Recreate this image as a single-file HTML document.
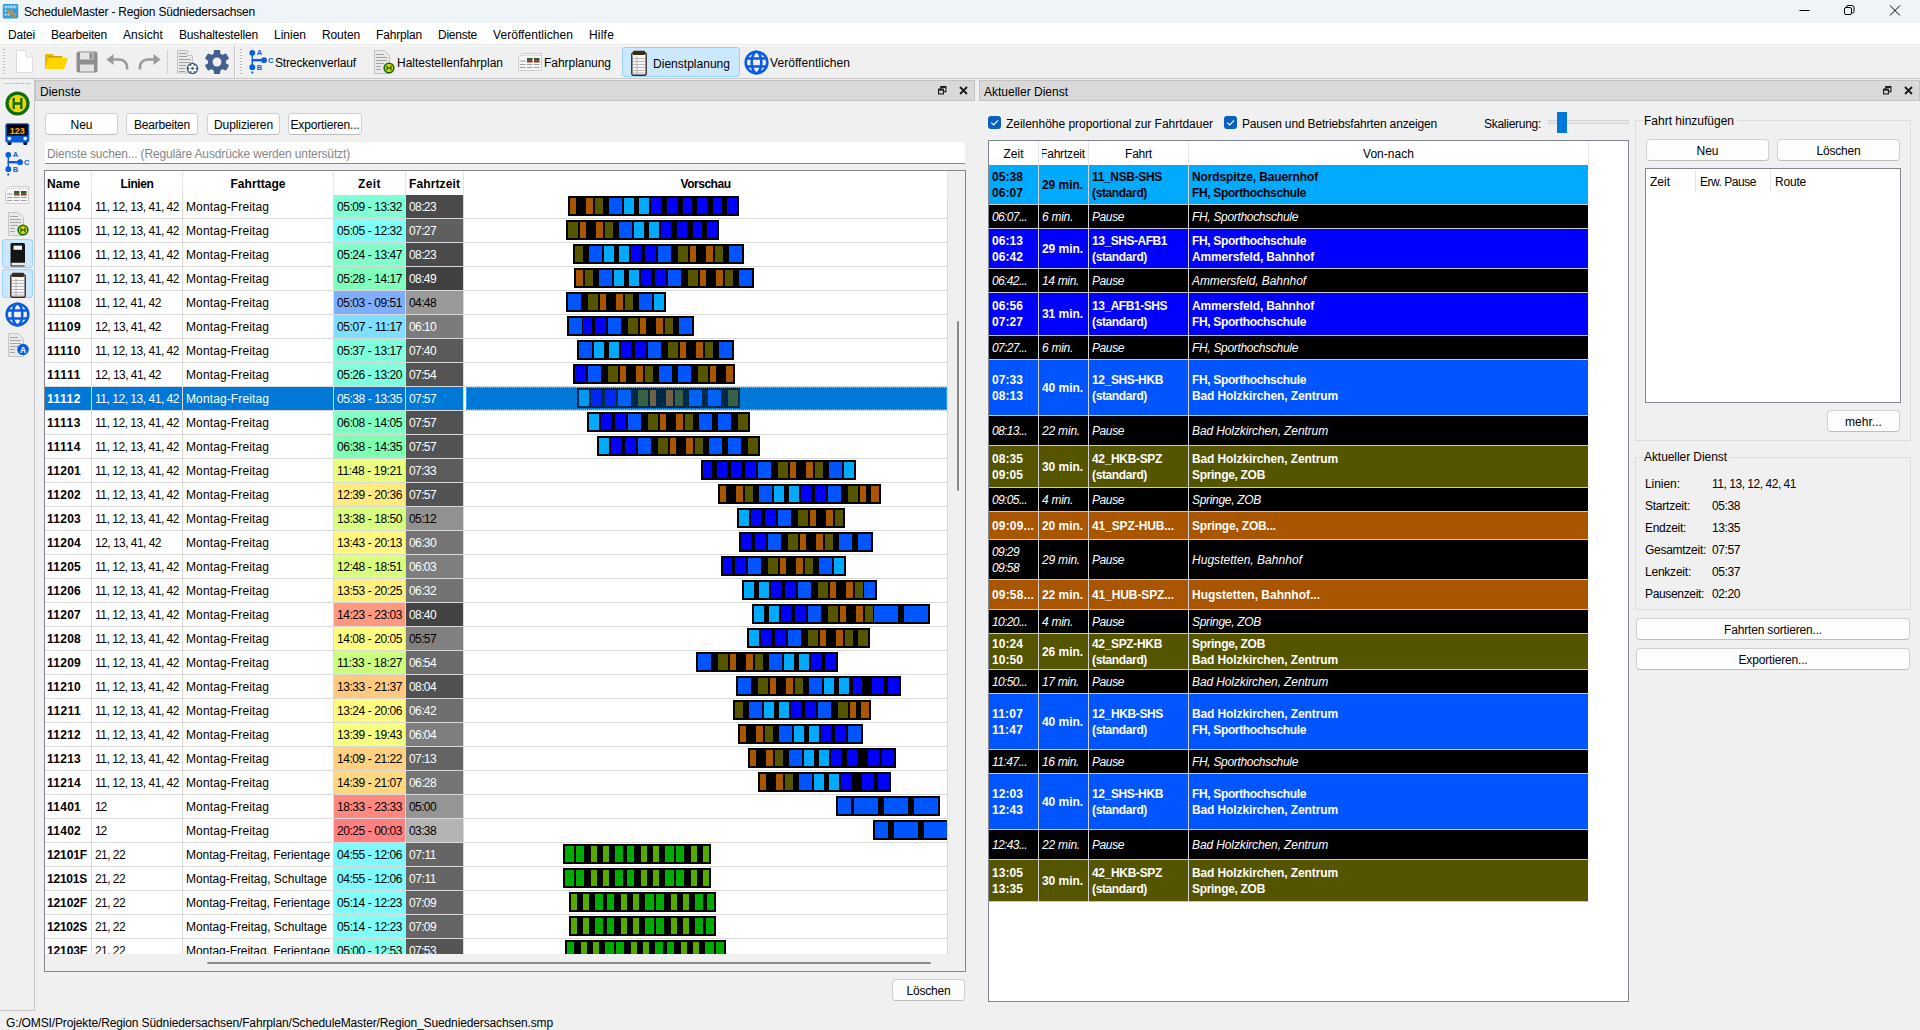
<!DOCTYPE html>
<html lang="de"><head><meta charset="utf-8"><title>ScheduleMaster - Region Südniedersachsen</title>
<style>
html,body{margin:0;padding:0;}
body{width:1920px;height:1030px;overflow:hidden;position:relative;background:#f0f0f0;font-family:"Liberation Sans",sans-serif;font-size:12px;color:#000;}
div,span.t,svg{position:absolute;box-sizing:border-box;}
span.t{white-space:nowrap;overflow:visible;}
.btn{background:#fdfdfd;border:1px solid #d0d0d0;border-bottom-color:#bdbdbd;border-radius:4px;}
.clip{overflow:hidden;}
</style></head><body>
<div style="left:0px;top:0px;width:1920px;height:23px;background:#eff4f9;"></div>
<svg style="left:2px;top:4px" width="17" height="14.5" viewBox="0 0 16 15"><rect x="0" y="0" width="16" height="15" rx="1.5" fill="#2f9bd8"/><rect x="1" y="1" width="14" height="4" fill="#4fb4ea"/><g fill="#bfe3f7"><rect x="2" y="2" width="2" height="2"/><rect x="5" y="2" width="2" height="2"/><rect x="8" y="2" width="2" height="2"/><rect x="11" y="2" width="2" height="2"/><rect x="2" y="6" width="2" height="2"/><rect x="2" y="10" width="2" height="2"/><rect x="5" y="10" width="2" height="2"/></g><circle cx="8" cy="8.5" r="2.6" fill="#f08a24"/><circle cx="12" cy="11.5" r="2.2" fill="#f08a24"/><circle cx="8" cy="8.5" r="1" fill="#2f9bd8"/><circle cx="12" cy="11.5" r="0.9" fill="#2f9bd8"/></svg>
<span class="t" style="left:24px;top:3.5px;height:16px;line-height:16px;letter-spacing:-0.178px;">ScheduleMaster - Region Südniedersachsen</span>
<svg style="left:1794px;top:0px" width="120" height="23" viewBox="0 0 120 23"><g stroke="#000" stroke-width="1" fill="none"><path d="M5.5 10.5h10"/><rect x="50.5" y="7.5" width="7" height="7" rx="1.5"/><path d="M52.5 7.500v-0.500a1.500 1.500 0 0 1 1.500-1.500h4a2 2 0 0 1 2 2v4a1.500 1.500 0 0 1-1.500 1.500h-0.500"/><path d="M96 5.5l10 10M106 5.5l-10 10"/></g></svg>
<div style="left:0px;top:23px;width:1920px;height:21px;background:#ffffff;"></div>
<span class="t" style="left:8px;top:26.5px;height:16px;line-height:16px;letter-spacing:-0.202px;">Datei</span>
<span class="t" style="left:51px;top:26.5px;height:16px;line-height:16px;letter-spacing:-0.204px;">Bearbeiten</span>
<span class="t" style="left:123px;top:26.5px;height:16px;line-height:16px;letter-spacing:0.093px;">Ansicht</span>
<span class="t" style="left:179px;top:26.5px;height:16px;line-height:16px;letter-spacing:-0.159px;">Bushaltestellen</span>
<span class="t" style="left:274px;top:26.5px;height:16px;line-height:16px;letter-spacing:-0.004px;">Linien</span>
<span class="t" style="left:322px;top:26.5px;height:16px;line-height:16px;letter-spacing:-0.116px;">Routen</span>
<span class="t" style="left:376px;top:26.5px;height:16px;line-height:16px;letter-spacing:-0.170px;">Fahrplan</span>
<span class="t" style="left:438px;top:26.5px;height:16px;line-height:16px;letter-spacing:-0.241px;">Dienste</span>
<span class="t" style="left:493px;top:26.5px;height:16px;line-height:16px;letter-spacing:0.055px;">Veröffentlichen</span>
<span class="t" style="left:589px;top:26.5px;height:16px;line-height:16px;letter-spacing:0.199px;">Hilfe</span>
<div style="left:0px;top:44px;width:1920px;height:35px;background:#f0f0f0;border-bottom:1px solid #c6c6c6;border-top:1px solid #e9e9e9;"></div>
<div style="left:0px;top:45px;width:1920px;height:1px;background:#fbfbfb;"></div>
<svg style="left:3px;top:49px" width="3" height="26" viewBox="0 0 3 26"><rect x="0" y="0" width="2" height="1" fill="#b8b8b8"/><rect x="1" y="1" width="1" height="1" fill="#fff"/><rect x="0" y="3" width="2" height="1" fill="#b8b8b8"/><rect x="1" y="4" width="1" height="1" fill="#fff"/><rect x="0" y="6" width="2" height="1" fill="#b8b8b8"/><rect x="1" y="7" width="1" height="1" fill="#fff"/><rect x="0" y="9" width="2" height="1" fill="#b8b8b8"/><rect x="1" y="10" width="1" height="1" fill="#fff"/><rect x="0" y="12" width="2" height="1" fill="#b8b8b8"/><rect x="1" y="13" width="1" height="1" fill="#fff"/><rect x="0" y="15" width="2" height="1" fill="#b8b8b8"/><rect x="1" y="16" width="1" height="1" fill="#fff"/><rect x="0" y="18" width="2" height="1" fill="#b8b8b8"/><rect x="1" y="19" width="1" height="1" fill="#fff"/><rect x="0" y="21" width="2" height="1" fill="#b8b8b8"/><rect x="1" y="22" width="1" height="1" fill="#fff"/><rect x="0" y="24" width="2" height="1" fill="#b8b8b8"/><rect x="1" y="25" width="1" height="1" fill="#fff"/></svg>
<svg style="left:16px;top:50px" width="18" height="24" viewBox="0 0 18 24"><path d="M0.5 0.5h9.5l6.5 6.5v15.5h-16z" fill="#fff" stroke="#dcdcdc"/><path d="M10 0.5v6.5h6.5" fill="#f4f4f4" stroke="#dcdcdc"/></svg>
<svg style="left:44px;top:52px" width="25" height="19" viewBox="0 0 25 19"><path d="M1 2h7.500l1.500 2h8.500v4h-17.500z" fill="#e8b800"/><path d="M1 4.500h3v12.500h-3z" fill="#e8b800"/><path d="M4.500 6h19.500l-4 11h-19z" fill="#ffd500"/><path d="M4 4.500h13" stroke="#b98f00" stroke-dasharray="1 1" fill="none"/></svg>
<svg style="left:76px;top:51px" width="22" height="22" viewBox="0 0 22 22"><rect x="0.500" y="0.500" width="21" height="21" rx="2.500" fill="#8e8e8e"/><rect x="4" y="1.500" width="13.500" height="7" fill="#e6e6e6"/><rect x="13.500" y="2" width="3" height="6" fill="#8e8e8e"/><rect x="4" y="13.500" width="14" height="7" fill="#e2e2e2"/></svg>
<svg style="left:106px;top:52px" width="25" height="20" viewBox="0 0 25 20"><path d="M5 7.500h8.500a7.500 7.500 0 0 1 7.500 7.500v2.500" fill="none" stroke="#9a9a9a" stroke-width="2.600"/><path d="M0.500 7.500l7-5.500v11z" fill="#9a9a9a"/></svg>
<svg style="left:136px;top:52px" width="25" height="20" viewBox="0 0 25 20"><path d="M20 7.500h-8.500a7.500 7.500 0 0 0-7.500 7.500v2.500" fill="none" stroke="#9a9a9a" stroke-width="2.600"/><path d="M24.500 7.500l-7-5.500v11z" fill="#9a9a9a"/></svg>
<div style="left:167px;top:50px;width:1px;height:24px;background:#d0d0d0;"></div>
<svg style="left:177px;top:50px" width="22" height="26" viewBox="0 0 22 26"><path d="M0.500 0.500h10l5 5v17.500h-15z" fill="#e9e9e9" stroke="#c4c4c4"/><path d="M10.500 0.500v5h5" fill="#fafafa" stroke="#c4c4c4"/><g stroke="#a0a0a0"><path d="M2 3.500h7M2 6.500h8M2 9.500h12M2 12.500h12M2 15.500h7M2 18.500h6M2 21.500h6"/></g><circle cx="15.5" cy="18.5" r="5.800" fill="#3e5f94"/><rect x="14.4" y="14.1" width="2.200" height="8.800" fill="#fff" transform="rotate(0 15.5 18.5)"/><rect x="14.4" y="14.1" width="2.200" height="8.800" fill="#fff" transform="rotate(60 15.5 18.5)"/><rect x="14.4" y="14.1" width="2.200" height="8.800" fill="#fff" transform="rotate(120 15.5 18.5)"/><circle cx="15.5" cy="18.5" r="3" fill="#fff"/><circle cx="15.5" cy="18.5" r="1.400" fill="#3e5f94"/></svg>
<svg style="left:204px;top:49px" width="26" height="26" viewBox="0 0 26 26"><rect x="9.9" y="1" width="6.2" height="24" rx="1" fill="#44608f" transform="rotate(0 13 13)"/><rect x="9.9" y="1" width="6.2" height="24" rx="1" fill="#44608f" transform="rotate(60 13 13)"/><rect x="9.9" y="1" width="6.2" height="24" rx="1" fill="#44608f" transform="rotate(120 13 13)"/><rect x="9.9" y="1" width="6.2" height="24" rx="1" fill="#44608f" transform="rotate(180 13 13)"/><rect x="9.9" y="1" width="6.2" height="24" rx="1" fill="#44608f" transform="rotate(240 13 13)"/><rect x="9.9" y="1" width="6.2" height="24" rx="1" fill="#44608f" transform="rotate(300 13 13)"/><circle cx="13" cy="13" r="9.12" fill="#44608f"/><circle cx="13" cy="13" r="4.44" fill="#f0f0f0"/></svg>
<div style="left:234px;top:46px;width:1px;height:32px;background:#c6c6c6;"></div>
<div style="left:235px;top:46px;width:1px;height:32px;background:#fafafa;"></div>
<svg style="left:240px;top:49px" width="3" height="26" viewBox="0 0 3 26"><rect x="0" y="0" width="2" height="1" fill="#b8b8b8"/><rect x="1" y="1" width="1" height="1" fill="#fff"/><rect x="0" y="3" width="2" height="1" fill="#b8b8b8"/><rect x="1" y="4" width="1" height="1" fill="#fff"/><rect x="0" y="6" width="2" height="1" fill="#b8b8b8"/><rect x="1" y="7" width="1" height="1" fill="#fff"/><rect x="0" y="9" width="2" height="1" fill="#b8b8b8"/><rect x="1" y="10" width="1" height="1" fill="#fff"/><rect x="0" y="12" width="2" height="1" fill="#b8b8b8"/><rect x="1" y="13" width="1" height="1" fill="#fff"/><rect x="0" y="15" width="2" height="1" fill="#b8b8b8"/><rect x="1" y="16" width="1" height="1" fill="#fff"/><rect x="0" y="18" width="2" height="1" fill="#b8b8b8"/><rect x="1" y="19" width="1" height="1" fill="#fff"/><rect x="0" y="21" width="2" height="1" fill="#b8b8b8"/><rect x="1" y="22" width="1" height="1" fill="#fff"/><rect x="0" y="24" width="2" height="1" fill="#b8b8b8"/><rect x="1" y="25" width="1" height="1" fill="#fff"/></svg>
<svg style="left:248px;top:48.5px" width="26" height="26" viewBox="0 0 26 26"><g fill="#0a5ce0"><circle cx="4.300" cy="3.800" r="2.900"/><circle cx="4.300" cy="18.200" r="2.900"/><circle cx="16" cy="11.200" r="2.900"/><rect x="3.600" y="4" width="1.400" height="14"/><rect x="3.600" y="10" width="10" height="2.400"/><rect x="3.300" y="22.500" width="2" height="2"/></g><g font-family="Liberation Sans,sans-serif" font-size="7.500" font-weight="bold" fill="#0a5ce0"><text x="8.800" y="6.200">A</text><text x="8.800" y="20.800">B</text><text x="20" y="14">C</text></g></svg>
<span class="t" style="left:275px;top:54.5px;height:16px;line-height:16px;letter-spacing:-0.158px;">Streckenverlauf</span>
<svg style="left:374px;top:50px" width="24" height="26" viewBox="0 0 24 26"><path d="M0.5 0.5h10l5 5v18h-15z" fill="#e9e9e9" stroke="#c4c4c4"/><g stroke="#a4a4a4"><path d="M2 4.5h8M2 7.5h11M2 10.5h11M2 13.5h8M2 16.5h5M2 19.5h5"/></g><circle cx="15" cy="18" r="5.6" fill="#0e6b10"/><circle cx="15" cy="18" r="4" fill="#f2d400"/><path d="M13 15.6v4.8M17 15.6v4.8M13 18h4" stroke="#0e6b10" stroke-width="1.3" fill="none"/></svg>
<span class="t" style="left:397px;top:54.5px;height:16px;line-height:16px;letter-spacing:-0.003px;">Haltestellenfahrplan</span>
<svg style="left:518px;top:53px" width="24" height="19" viewBox="0 0 24 19"><path d="M4.500 0.500h19v17h-23v-12.500z" fill="#f6f6f6" stroke="#cfcfcf"/><path d="M4 2.500h19" stroke="#c4c4c4" stroke-dasharray="1 1"/><g><rect x="9" y="5" width="5.500" height="2.200" fill="#22602e"/><rect x="9" y="7.200" width="5.500" height="2.300" fill="#8b3520"/><rect x="16" y="5" width="5.500" height="2.200" fill="#22602e"/><rect x="16" y="7.200" width="5.500" height="2.300" fill="#8b3520"/></g><g stroke="#a0a0a0"><path d="M2 8h5.500M2 11.500h5.500M9 11.500h5.500M16 11.500h5.500M2 14.500h5.500M9 14.500h5.500M16 14.500h5.500"/></g></svg>
<span class="t" style="left:544px;top:54.5px;height:16px;line-height:16px;letter-spacing:-0.035px;">Fahrplanung</span>
<div style="left:622px;top:47px;width:118px;height:30px;background:#cce8ff;border:1px solid #99d1ff;border-radius:3px;"></div>
<svg style="left:631px;top:50px" width="16" height="26" viewBox="0 0 16 26"><rect x="0.800" y="2.800" width="14.400" height="22.400" rx="1.500" fill="#f6f6f6" stroke="#3a2a1c" stroke-width="1.400"/><rect x="2" y="0.800" width="12" height="4.200" rx="1" fill="#3a2a1c"/><g stroke="#ababab" stroke-width="0.800" fill="none"><path d="M2 8.500h12M2 11.500h12M2 14.500h12M2 17.500h12M2 20.500h12M2 23h12M6 6.500v17.500"/></g></svg>
<span class="t" style="left:653px;top:56px;height:16px;line-height:16px;letter-spacing:0.022px;">Dienstplanung</span>
<svg style="left:744px;top:50px" width="25" height="25" viewBox="0 0 25 25"><g fill="none" stroke="#0a5ce0" stroke-width="2.600"><circle cx="12.5" cy="12.5" r="10.8"/><ellipse cx="12.5" cy="12.5" rx="4.8" ry="10.8"/><path d="M2.5 8.5h20M2.5 16.500h20"/></g></svg>
<span class="t" style="left:770px;top:54.5px;height:16px;line-height:16px;letter-spacing:0.055px;">Veröffentlichen</span>
<div style="left:0px;top:79px;width:35px;height:932px;background:#f0f0f0;border-right:1px solid #c6c6c6;border-bottom:1px solid #c6c6c6;"></div>
<svg style="left:4px;top:83px" width="27" height="2" viewBox="0 0 27 2"><rect x="0" y="0" width="2" height="1" fill="#b8b8b8"/><rect x="3" y="0" width="2" height="1" fill="#b8b8b8"/><rect x="6" y="0" width="2" height="1" fill="#b8b8b8"/><rect x="9" y="0" width="2" height="1" fill="#b8b8b8"/><rect x="12" y="0" width="2" height="1" fill="#b8b8b8"/><rect x="15" y="0" width="2" height="1" fill="#b8b8b8"/><rect x="18" y="0" width="2" height="1" fill="#b8b8b8"/><rect x="21" y="0" width="2" height="1" fill="#b8b8b8"/><rect x="24" y="0" width="2" height="1" fill="#b8b8b8"/></svg>
<svg style="left:4.5px;top:91px" width="25" height="25" viewBox="0 0 25 25"><circle cx="12.5" cy="12.5" r="12.100" fill="#0e6b10"/><circle cx="12.5" cy="12.5" r="8.8" fill="#f2d400"/><path d="M8.700 7v11M16.300 7v11M8.700 12.500h7.600" stroke="#0e6b10" stroke-width="2.300" fill="none"/></svg>
<svg style="left:5px;top:123px" width="25" height="23" viewBox="0 0 25 23"><rect x="2.500" y="17" width="4" height="5" rx="1.300" fill="#111"/><rect x="18.300" y="17" width="4" height="5" rx="1.300" fill="#111"/><rect x="0.300" y="0.300" width="24" height="19.200" rx="2.200" fill="#0a5ce0"/><rect x="1.800" y="1.600" width="21" height="11" fill="#0a0a0a"/><rect x="1.800" y="1.600" width="21" height="2.400" fill="#000"/><text x="12.300" y="11.300" font-family="Liberation Sans,sans-serif" font-size="9" font-weight="bold" fill="#ffae00" text-anchor="middle">123</text><circle cx="4.400" cy="15.600" r="1.800" fill="#fff"/><circle cx="20.200" cy="15.600" r="1.800" fill="#fff"/></svg>
<svg style="left:4px;top:151px" width="26" height="26" viewBox="0 0 26 26"><g fill="#0a5ce0"><circle cx="4.300" cy="3.800" r="2.900"/><circle cx="4.300" cy="18.200" r="2.900"/><circle cx="16" cy="11.200" r="2.900"/><rect x="3.600" y="4" width="1.400" height="14"/><rect x="3.600" y="10" width="10" height="2.400"/><rect x="3.300" y="22.500" width="2" height="2"/></g><g font-family="Liberation Sans,sans-serif" font-size="7.500" font-weight="bold" fill="#0a5ce0"><text x="8.800" y="6.200">A</text><text x="8.800" y="20.800">B</text><text x="20" y="14">C</text></g></svg>
<svg style="left:5px;top:185.5px" width="24" height="19" viewBox="0 0 24 19"><path d="M4.500 0.500h19v17h-23v-12.500z" fill="#f6f6f6" stroke="#cfcfcf"/><path d="M4 2.500h19" stroke="#c4c4c4" stroke-dasharray="1 1"/><g><rect x="9" y="5" width="5.500" height="2.200" fill="#22602e"/><rect x="9" y="7.200" width="5.500" height="2.300" fill="#8b3520"/><rect x="16" y="5" width="5.500" height="2.200" fill="#22602e"/><rect x="16" y="7.200" width="5.500" height="2.300" fill="#8b3520"/></g><g stroke="#a0a0a0"><path d="M2 8h5.500M2 11.500h5.500M9 11.500h5.500M16 11.500h5.500M2 14.500h5.500M9 14.500h5.500M16 14.500h5.500"/></g></svg>
<svg style="left:8px;top:212px" width="24" height="26" viewBox="0 0 24 26"><path d="M0.5 0.5h10l5 5v18h-15z" fill="#e9e9e9" stroke="#c4c4c4"/><g stroke="#a4a4a4"><path d="M2 4.5h8M2 7.5h11M2 10.5h11M2 13.5h8M2 16.5h5M2 19.5h5"/></g><circle cx="15" cy="18" r="5.6" fill="#0e6b10"/><circle cx="15" cy="18" r="4" fill="#f2d400"/><path d="M13 15.6v4.8M17 15.6v4.8M13 18h4" stroke="#0e6b10" stroke-width="1.3" fill="none"/></svg>
<div style="left:2px;top:239px;width:31px;height:29px;background:#cce8ff;border:1px solid #99d1ff;border-radius:3px;"></div>
<svg style="left:10px;top:243px" width="16" height="24" viewBox="0 0 16 24"><rect x="0.5" y="0" width="14.500" height="23.500" rx="1.500" fill="#151515"/><rect x="3.500" y="2.600" width="8.500" height="4.200" fill="#f2f2f2"/><path d="M1.200 19.800h13.800v2.600h-12.500a1.300 1.300 0 0 1 0-2.600z" fill="#ececec"/></svg>
<div style="left:2px;top:269px;width:31px;height:29px;background:#cce8ff;border:1px solid #99d1ff;border-radius:3px;"></div>
<svg style="left:10px;top:272px" width="16" height="26" viewBox="0 0 16 26"><rect x="0.800" y="2.800" width="14.400" height="22.400" rx="1.500" fill="#f6f6f6" stroke="#3a2a1c" stroke-width="1.400"/><rect x="2" y="0.800" width="12" height="4.200" rx="1" fill="#3a2a1c"/><g stroke="#ababab" stroke-width="0.800" fill="none"><path d="M2 8.500h12M2 11.500h12M2 14.500h12M2 17.500h12M2 20.500h12M2 23h12M6 6.500v17.500"/></g></svg>
<svg style="left:4.5px;top:301.5px" width="25" height="25" viewBox="0 0 25 25"><g fill="none" stroke="#0a5ce0" stroke-width="2.600"><circle cx="12.5" cy="12.5" r="10.8"/><ellipse cx="12.5" cy="12.5" rx="4.8" ry="10.8"/><path d="M2.5 8.5h20M2.5 16.500h20"/></g></svg>
<svg style="left:8px;top:332.5px" width="24" height="26" viewBox="0 0 24 26"><path d="M0.5 0.5h10l5 5v18h-15z" fill="#e9e9e9" stroke="#c4c4c4"/><g stroke="#a4a4a4"><path d="M2 4.500h8M2 7.500h11M2 10.500h11M2 13.500h8M2 16.500h5M2 19.500h5"/></g><circle cx="15" cy="16.500" r="5.800" fill="#0a5ce0"/><text x="15" y="19.600" font-family="Liberation Sans,sans-serif" font-size="8.500" font-weight="bold" fill="#fff" text-anchor="middle">A</text></svg>
<span class="t" style="left:6px;top:1015px;height:16px;line-height:16px;letter-spacing:-0.129px;">G:/OMSI/Projekte/Region Südniedersachsen/Fahrplan/ScheduleMaster/Region_Suedniedersachsen.smp</span>
<div style="left:35px;top:80px;width:940px;height:21px;background:#d9d9d9;border:1px solid #c3c3c3;"></div>
<span class="t" style="left:40px;top:84px;height:16px;line-height:16px;">Dienste</span>
<svg style="left:938px;top:86px" width="8.5" height="8.5" viewBox="0 0 10 10"><g fill="none" stroke="#1a1a1a" stroke-width="1.300"><rect x="0.650" y="3.650" width="5.700" height="5.700"/><path d="M3.300 3.500v-2.850h6v6h-2.800"/></g><rect x="0.650" y="3.650" width="5.700" height="1.800" fill="#1a1a1a"/><rect x="3.300" y="0.650" width="6" height="1.600" fill="#1a1a1a"/></svg>
<svg style="left:959px;top:86px" width="9" height="9" viewBox="0 0 9 9"><path d="M1 1l7 7M8 1l-7 7" stroke="#1a1a1a" stroke-width="1.800" fill="none"/></svg>
<div class="btn" style="left:45px;top:113px;width:73px;height:22px;"></div>
<span class="t" style="left:70.5px;top:117px;height:16px;line-height:16px;letter-spacing:-0.004px;">Neu</span>
<div class="btn" style="left:126px;top:113px;width:72px;height:22px;"></div>
<span class="t" style="left:134.0px;top:117px;height:16px;line-height:16px;letter-spacing:-0.204px;">Bearbeiten</span>
<div class="btn" style="left:207px;top:113px;width:73px;height:22px;"></div>
<span class="t" style="left:214.0px;top:117px;height:16px;line-height:16px;letter-spacing:-0.093px;">Duplizieren</span>
<div class="btn" style="left:288px;top:113px;width:74px;height:22px;"></div>
<span class="t" style="left:290.5px;top:117px;height:16px;line-height:16px;letter-spacing:-0.169px;">Exportieren...</span>
<div style="left:45px;top:142px;width:920px;height:22px;background:#ffffff;border-bottom:1px solid #868686;border-radius:3px 3px 0 0;"></div>
<span class="t" style="left:47px;top:145.5px;height:16px;line-height:16px;color:#868686;letter-spacing:-0.140px;">Dienste suchen... (Reguläre Ausdrücke werden untersützt)</span>
<div style="left:44px;top:170px;width:922px;height:802px;background:#ffffff;border:1px solid #828790;"></div>
<div style="left:45px;top:954px;width:920px;height:17px;background:#f0f0f0;"></div>
<div style="left:948px;top:171px;width:17px;height:783px;background:#f0f0f0;"></div>
<div style="left:207px;top:962px;width:724px;height:2px;background:#8a8a8a;border-radius:1px;"></div>
<div style="left:957px;top:321px;width:2px;height:170px;background:#8a8a8a;border-radius:1px;"></div>
<span class="t" style="left:47px;top:175.5px;height:16px;line-height:16px;font-weight:bold;letter-spacing:0.079px;">Name</span>
<span class="t" style="left:120.5px;top:175.5px;height:16px;line-height:16px;font-weight:bold;letter-spacing:-0.389px;">Linien</span>
<span class="t" style="left:230.5px;top:175.5px;height:16px;line-height:16px;font-weight:bold;letter-spacing:0.036px;">Fahrttage</span>
<span class="t" style="left:358.0px;top:175.5px;height:16px;line-height:16px;font-weight:bold;letter-spacing:0.416px;">Zeit</span>
<span class="t" style="left:409.0px;top:175.5px;height:16px;line-height:16px;font-weight:bold;letter-spacing:0.111px;">Fahrtzeit</span>
<span class="t" style="left:680.5px;top:175.5px;height:16px;line-height:16px;font-weight:bold;letter-spacing:-0.474px;">Vorschau</span>
<div style="left:91px;top:171px;width:1px;height:24px;background:#e5e5e5;"></div>
<div style="left:182px;top:171px;width:1px;height:24px;background:#e5e5e5;"></div>
<div style="left:333px;top:171px;width:1px;height:24px;background:#e5e5e5;"></div>
<div style="left:405px;top:171px;width:1px;height:24px;background:#e5e5e5;"></div>
<div style="left:463px;top:171px;width:1px;height:24px;background:#e5e5e5;"></div>
<div style="left:947px;top:171px;width:1px;height:24px;background:#e5e5e5;"></div>
<div class="clip" style="left:45px;top:195px;width:903px;height:759px;">
<div style="left:289px;top:0px;width:71px;height:23px;background:#80ffd6;"></div>
<div style="left:361px;top:0px;width:57px;height:23px;background:#4a4a4a;"></div>
<div style="left:0px;top:23px;width:903px;height:1px;background:#d9d9d9;"></div>
<span class="t" style="left:2px;top:3.5px;height:16px;line-height:16px;font-weight:bold;letter-spacing:0.392px;">11104</span>
<span class="t" style="left:50px;top:3.5px;height:16px;line-height:16px;letter-spacing:-0.473px;">11, 12, 13, 41, 42</span>
<span class="t" style="left:141px;top:3.5px;height:16px;line-height:16px;letter-spacing:0.117px;">Montag-Freitag</span>
<span class="t" style="left:292px;top:3.5px;height:16px;line-height:16px;letter-spacing:-0.440px;">05:09 - 13:32</span>
<span class="t" style="left:364px;top:3.5px;height:16px;line-height:16px;color:#fff;letter-spacing:-0.606px;">08:23</span>
<div style="left:523px;top:1px;width:171px;height:20px;background:#000;"></div>
<div style="left:525px;top:3px;width:6px;height:16px;background:#aa5500;"></div>
<div style="left:541px;top:3px;width:7px;height:16px;background:#aa5500;"></div>
<div style="left:550px;top:3px;width:8px;height:16px;background:#555500;"></div>
<div style="left:564px;top:3px;width:13px;height:16px;background:#0055ff;"></div>
<div style="left:579px;top:3px;width:10px;height:16px;background:#00aaff;"></div>
<div style="left:594px;top:3px;width:10px;height:16px;background:#00aaff;"></div>
<div style="left:606px;top:3px;width:10px;height:16px;background:#0000ff;"></div>
<div style="left:622px;top:3px;width:10px;height:16px;background:#0000ff;"></div>
<div style="left:638px;top:3px;width:9px;height:16px;background:#0000ff;"></div>
<div style="left:652px;top:3px;width:10px;height:16px;background:#0000ff;"></div>
<div style="left:668px;top:3px;width:9px;height:16px;background:#0000ff;"></div>
<div style="left:682px;top:3px;width:10px;height:16px;background:#0000ff;"></div>
<div style="left:289px;top:24px;width:71px;height:23px;background:#80fff7;"></div>
<div style="left:361px;top:24px;width:57px;height:23px;background:#5f5f5f;"></div>
<div style="left:0px;top:47px;width:903px;height:1px;background:#d9d9d9;"></div>
<span class="t" style="left:2px;top:27.5px;height:16px;line-height:16px;font-weight:bold;letter-spacing:0.392px;">11105</span>
<span class="t" style="left:50px;top:27.5px;height:16px;line-height:16px;letter-spacing:-0.473px;">11, 12, 13, 41, 42</span>
<span class="t" style="left:141px;top:27.5px;height:16px;line-height:16px;letter-spacing:0.117px;">Montag-Freitag</span>
<span class="t" style="left:292px;top:27.5px;height:16px;line-height:16px;letter-spacing:-0.440px;">05:05 - 12:32</span>
<span class="t" style="left:364px;top:27.5px;height:16px;line-height:16px;color:#fff;letter-spacing:-0.606px;">07:27</span>
<div style="left:521px;top:25px;width:153px;height:20px;background:#000;"></div>
<div style="left:523px;top:27px;width:10px;height:16px;background:#555500;"></div>
<div style="left:535px;top:27px;width:6px;height:16px;background:#aa5500;"></div>
<div style="left:551px;top:27px;width:7px;height:16px;background:#aa5500;"></div>
<div style="left:560px;top:27px;width:8px;height:16px;background:#555500;"></div>
<div style="left:574px;top:27px;width:13px;height:16px;background:#0055ff;"></div>
<div style="left:589px;top:27px;width:10px;height:16px;background:#00aaff;"></div>
<div style="left:604px;top:27px;width:10px;height:16px;background:#00aaff;"></div>
<div style="left:616px;top:27px;width:10px;height:16px;background:#0000ff;"></div>
<div style="left:632px;top:27px;width:10px;height:16px;background:#0000ff;"></div>
<div style="left:648px;top:27px;width:9px;height:16px;background:#0000ff;"></div>
<div style="left:662px;top:27px;width:10px;height:16px;background:#0000ff;"></div>
<div style="left:289px;top:48px;width:71px;height:23px;background:#80ffcd;"></div>
<div style="left:361px;top:48px;width:57px;height:23px;background:#4a4a4a;"></div>
<div style="left:0px;top:71px;width:903px;height:1px;background:#d9d9d9;"></div>
<span class="t" style="left:2px;top:51.5px;height:16px;line-height:16px;font-weight:bold;letter-spacing:0.392px;">11106</span>
<span class="t" style="left:50px;top:51.5px;height:16px;line-height:16px;letter-spacing:-0.473px;">11, 12, 13, 41, 42</span>
<span class="t" style="left:141px;top:51.5px;height:16px;line-height:16px;letter-spacing:0.117px;">Montag-Freitag</span>
<span class="t" style="left:292px;top:51.5px;height:16px;line-height:16px;letter-spacing:-0.440px;">05:24 - 13:47</span>
<span class="t" style="left:364px;top:51.5px;height:16px;line-height:16px;color:#fff;letter-spacing:-0.606px;">08:23</span>
<div style="left:528px;top:49px;width:171px;height:20px;background:#000;"></div>
<div style="left:530px;top:51px;width:8px;height:16px;background:#555500;"></div>
<div style="left:544px;top:51px;width:13px;height:16px;background:#0055ff;"></div>
<div style="left:559px;top:51px;width:10px;height:16px;background:#00aaff;"></div>
<div style="left:574px;top:51px;width:10px;height:16px;background:#00aaff;"></div>
<div style="left:586px;top:51px;width:10px;height:16px;background:#0000ff;"></div>
<div style="left:600px;top:51px;width:11px;height:16px;background:#0000ff;"></div>
<div style="left:613px;top:51px;width:13px;height:16px;background:#0055ff;"></div>
<div style="left:633px;top:51px;width:10px;height:16px;background:#555500;"></div>
<div style="left:645px;top:51px;width:6px;height:16px;background:#aa5500;"></div>
<div style="left:661px;top:51px;width:7px;height:16px;background:#aa5500;"></div>
<div style="left:670px;top:51px;width:8px;height:16px;background:#555500;"></div>
<div style="left:684px;top:51px;width:13px;height:16px;background:#0055ff;"></div>
<div style="left:289px;top:72px;width:71px;height:23px;background:#80ffbd;"></div>
<div style="left:361px;top:72px;width:57px;height:23px;background:#404040;"></div>
<div style="left:0px;top:95px;width:903px;height:1px;background:#d9d9d9;"></div>
<span class="t" style="left:2px;top:75.5px;height:16px;line-height:16px;font-weight:bold;letter-spacing:0.392px;">11107</span>
<span class="t" style="left:50px;top:75.5px;height:16px;line-height:16px;letter-spacing:-0.473px;">11, 12, 13, 41, 42</span>
<span class="t" style="left:141px;top:75.5px;height:16px;line-height:16px;letter-spacing:0.117px;">Montag-Freitag</span>
<span class="t" style="left:292px;top:75.5px;height:16px;line-height:16px;letter-spacing:-0.440px;">05:28 - 14:17</span>
<span class="t" style="left:364px;top:75.5px;height:16px;line-height:16px;color:#fff;letter-spacing:-0.606px;">08:49</span>
<div style="left:529px;top:73px;width:180px;height:20px;background:#000;"></div>
<div style="left:531px;top:75px;width:7px;height:16px;background:#aa5500;"></div>
<div style="left:540px;top:75px;width:8px;height:16px;background:#555500;"></div>
<div style="left:554px;top:75px;width:13px;height:16px;background:#0055ff;"></div>
<div style="left:569px;top:75px;width:10px;height:16px;background:#00aaff;"></div>
<div style="left:584px;top:75px;width:10px;height:16px;background:#00aaff;"></div>
<div style="left:596px;top:75px;width:10px;height:16px;background:#0000ff;"></div>
<div style="left:610px;top:75px;width:11px;height:16px;background:#0000ff;"></div>
<div style="left:623px;top:75px;width:13px;height:16px;background:#0055ff;"></div>
<div style="left:643px;top:75px;width:10px;height:16px;background:#555500;"></div>
<div style="left:655px;top:75px;width:6px;height:16px;background:#aa5500;"></div>
<div style="left:671px;top:75px;width:7px;height:16px;background:#aa5500;"></div>
<div style="left:680px;top:75px;width:8px;height:16px;background:#555500;"></div>
<div style="left:694px;top:75px;width:13px;height:16px;background:#0055ff;"></div>
<div style="left:289px;top:96px;width:71px;height:23px;background:#80aeff;"></div>
<div style="left:361px;top:96px;width:57px;height:23px;background:#9a9a9a;"></div>
<div style="left:0px;top:119px;width:903px;height:1px;background:#d9d9d9;"></div>
<span class="t" style="left:2px;top:99.5px;height:16px;line-height:16px;font-weight:bold;letter-spacing:0.392px;">11108</span>
<span class="t" style="left:50px;top:99.5px;height:16px;line-height:16px;letter-spacing:-0.465px;">11, 12, 41, 42</span>
<span class="t" style="left:141px;top:99.5px;height:16px;line-height:16px;letter-spacing:0.117px;">Montag-Freitag</span>
<span class="t" style="left:292px;top:99.5px;height:16px;line-height:16px;letter-spacing:-0.440px;">05:03 - 09:51</span>
<span class="t" style="left:364px;top:99.5px;height:16px;line-height:16px;color:#000;letter-spacing:-0.606px;">04:48</span>
<div style="left:521px;top:97px;width:100px;height:20px;background:#000;"></div>
<div style="left:523px;top:99px;width:13px;height:16px;background:#0055ff;"></div>
<div style="left:543px;top:99px;width:10px;height:16px;background:#555500;"></div>
<div style="left:555px;top:99px;width:6px;height:16px;background:#aa5500;"></div>
<div style="left:571px;top:99px;width:7px;height:16px;background:#aa5500;"></div>
<div style="left:580px;top:99px;width:8px;height:16px;background:#555500;"></div>
<div style="left:594px;top:99px;width:13px;height:16px;background:#0055ff;"></div>
<div style="left:609px;top:99px;width:10px;height:16px;background:#00aaff;"></div>
<div style="left:289px;top:120px;width:71px;height:23px;background:#80deff;"></div>
<div style="left:361px;top:120px;width:57px;height:23px;background:#7b7b7b;"></div>
<div style="left:0px;top:143px;width:903px;height:1px;background:#d9d9d9;"></div>
<span class="t" style="left:2px;top:123.5px;height:16px;line-height:16px;font-weight:bold;letter-spacing:0.392px;">11109</span>
<span class="t" style="left:50px;top:123.5px;height:16px;line-height:16px;letter-spacing:-0.528px;">12, 13, 41, 42</span>
<span class="t" style="left:141px;top:123.5px;height:16px;line-height:16px;letter-spacing:0.117px;">Montag-Freitag</span>
<span class="t" style="left:292px;top:123.5px;height:16px;line-height:16px;letter-spacing:-0.372px;">05:07 - 11:17</span>
<span class="t" style="left:364px;top:123.5px;height:16px;line-height:16px;color:#fff;letter-spacing:-0.606px;">06:10</span>
<div style="left:522px;top:121px;width:127px;height:20px;background:#000;"></div>
<div style="left:524px;top:123px;width:13px;height:16px;background:#0055ff;"></div>
<div style="left:538px;top:123px;width:9px;height:16px;background:#0000ff;"></div>
<div style="left:550px;top:123px;width:11px;height:16px;background:#0000ff;"></div>
<div style="left:563px;top:123px;width:13px;height:16px;background:#0055ff;"></div>
<div style="left:583px;top:123px;width:10px;height:16px;background:#555500;"></div>
<div style="left:595px;top:123px;width:6px;height:16px;background:#aa5500;"></div>
<div style="left:611px;top:123px;width:7px;height:16px;background:#aa5500;"></div>
<div style="left:620px;top:123px;width:8px;height:16px;background:#555500;"></div>
<div style="left:634px;top:123px;width:13px;height:16px;background:#0055ff;"></div>
<div style="left:289px;top:144px;width:71px;height:23px;background:#80ffde;"></div>
<div style="left:361px;top:144px;width:57px;height:23px;background:#5a5a5a;"></div>
<div style="left:0px;top:167px;width:903px;height:1px;background:#d9d9d9;"></div>
<span class="t" style="left:2px;top:147.5px;height:16px;line-height:16px;font-weight:bold;letter-spacing:0.524px;">11110</span>
<span class="t" style="left:50px;top:147.5px;height:16px;line-height:16px;letter-spacing:-0.473px;">11, 12, 13, 41, 42</span>
<span class="t" style="left:141px;top:147.5px;height:16px;line-height:16px;letter-spacing:0.117px;">Montag-Freitag</span>
<span class="t" style="left:292px;top:147.5px;height:16px;line-height:16px;letter-spacing:-0.440px;">05:37 - 13:17</span>
<span class="t" style="left:364px;top:147.5px;height:16px;line-height:16px;color:#fff;letter-spacing:-0.606px;">07:40</span>
<div style="left:532px;top:145px;width:157px;height:20px;background:#000;"></div>
<div style="left:534px;top:147px;width:13px;height:16px;background:#0055ff;"></div>
<div style="left:549px;top:147px;width:10px;height:16px;background:#00aaff;"></div>
<div style="left:564px;top:147px;width:10px;height:16px;background:#00aaff;"></div>
<div style="left:576px;top:147px;width:10px;height:16px;background:#0000ff;"></div>
<div style="left:590px;top:147px;width:11px;height:16px;background:#0000ff;"></div>
<div style="left:603px;top:147px;width:13px;height:16px;background:#0055ff;"></div>
<div style="left:623px;top:147px;width:10px;height:16px;background:#555500;"></div>
<div style="left:635px;top:147px;width:6px;height:16px;background:#aa5500;"></div>
<div style="left:651px;top:147px;width:7px;height:16px;background:#aa5500;"></div>
<div style="left:660px;top:147px;width:8px;height:16px;background:#555500;"></div>
<div style="left:674px;top:147px;width:13px;height:16px;background:#0055ff;"></div>
<div style="left:289px;top:168px;width:71px;height:23px;background:#80ffdc;"></div>
<div style="left:361px;top:168px;width:57px;height:23px;background:#545454;"></div>
<div style="left:0px;top:191px;width:903px;height:1px;background:#d9d9d9;"></div>
<span class="t" style="left:2px;top:171.5px;height:16px;line-height:16px;font-weight:bold;letter-spacing:0.657px;">11111</span>
<span class="t" style="left:50px;top:171.5px;height:16px;line-height:16px;letter-spacing:-0.528px;">12, 13, 41, 42</span>
<span class="t" style="left:141px;top:171.5px;height:16px;line-height:16px;letter-spacing:0.117px;">Montag-Freitag</span>
<span class="t" style="left:292px;top:171.5px;height:16px;line-height:16px;letter-spacing:-0.440px;">05:26 - 13:20</span>
<span class="t" style="left:364px;top:171.5px;height:16px;line-height:16px;color:#fff;letter-spacing:-0.606px;">07:54</span>
<div style="left:528px;top:169px;width:162px;height:20px;background:#000;"></div>
<div style="left:530px;top:171px;width:11px;height:16px;background:#0000ff;"></div>
<div style="left:543px;top:171px;width:13px;height:16px;background:#0055ff;"></div>
<div style="left:563px;top:171px;width:10px;height:16px;background:#555500;"></div>
<div style="left:575px;top:171px;width:6px;height:16px;background:#aa5500;"></div>
<div style="left:591px;top:171px;width:7px;height:16px;background:#aa5500;"></div>
<div style="left:600px;top:171px;width:8px;height:16px;background:#555500;"></div>
<div style="left:614px;top:171px;width:13px;height:16px;background:#0055ff;"></div>
<div style="left:633px;top:171px;width:13px;height:16px;background:#0055ff;"></div>
<div style="left:653px;top:171px;width:10px;height:16px;background:#555500;"></div>
<div style="left:665px;top:171px;width:6px;height:16px;background:#aa5500;"></div>
<div style="left:681px;top:171px;width:7px;height:16px;background:#aa5500;"></div>
<div style="left:0px;top:192px;width:46px;height:23px;background:#0078d7;"></div>
<div style="left:47px;top:192px;width:90px;height:23px;background:#0078d7;"></div>
<div style="left:138px;top:192px;width:150px;height:23px;background:#0078d7;"></div>
<div style="left:289px;top:192px;width:71px;height:23px;background:#0078d7;"></div>
<div style="left:361px;top:192px;width:57px;height:23px;background:#0078d7;"></div>
<div style="left:421px;top:192px;width:481px;height:23px;background:#0078d7;border:1px dotted #e8a060;"></div>
<div style="left:0px;top:215px;width:903px;height:1px;background:#d9d9d9;"></div>
<span class="t" style="left:2px;top:195.5px;height:16px;line-height:16px;font-weight:bold;color:#fff;letter-spacing:0.524px;">11112</span>
<span class="t" style="left:50px;top:195.5px;height:16px;line-height:16px;color:#fff;letter-spacing:-0.473px;">11, 12, 13, 41, 42</span>
<span class="t" style="left:141px;top:195.5px;height:16px;line-height:16px;color:#fff;letter-spacing:0.117px;">Montag-Freitag</span>
<span class="t" style="left:292px;top:195.5px;height:16px;line-height:16px;color:#fff;letter-spacing:-0.440px;">05:38 - 13:35</span>
<span class="t" style="left:364px;top:195.5px;height:16px;line-height:16px;color:#fff;letter-spacing:-0.606px;">07:57</span>
<div style="left:532px;top:193px;width:163px;height:20px;background:#002847;"></div>
<div style="left:534px;top:195px;width:10px;height:16px;background:#009af2;"></div>
<div style="left:546px;top:195px;width:10px;height:16px;background:#0028f2;"></div>
<div style="left:560px;top:195px;width:11px;height:16px;background:#0028f2;"></div>
<div style="left:573px;top:195px;width:13px;height:16px;background:#0061f2;"></div>
<div style="left:593px;top:195px;width:10px;height:16px;background:#396147;"></div>
<div style="left:605px;top:195px;width:6px;height:16px;background:#726147;"></div>
<div style="left:621px;top:195px;width:7px;height:16px;background:#726147;"></div>
<div style="left:630px;top:195px;width:8px;height:16px;background:#396147;"></div>
<div style="left:644px;top:195px;width:13px;height:16px;background:#0061f2;"></div>
<div style="left:663px;top:195px;width:13px;height:16px;background:#0061f2;"></div>
<div style="left:683px;top:195px;width:10px;height:16px;background:#396147;"></div>
<div style="left:289px;top:216px;width:71px;height:23px;background:#80ffc3;"></div>
<div style="left:361px;top:216px;width:57px;height:23px;background:#535353;"></div>
<div style="left:0px;top:239px;width:903px;height:1px;background:#d9d9d9;"></div>
<span class="t" style="left:2px;top:219.5px;height:16px;line-height:16px;font-weight:bold;letter-spacing:0.524px;">11113</span>
<span class="t" style="left:50px;top:219.5px;height:16px;line-height:16px;letter-spacing:-0.473px;">11, 12, 13, 41, 42</span>
<span class="t" style="left:141px;top:219.5px;height:16px;line-height:16px;letter-spacing:0.117px;">Montag-Freitag</span>
<span class="t" style="left:292px;top:219.5px;height:16px;line-height:16px;letter-spacing:-0.440px;">06:08 - 14:05</span>
<span class="t" style="left:364px;top:219.5px;height:16px;line-height:16px;color:#fff;letter-spacing:-0.606px;">07:57</span>
<div style="left:542px;top:217px;width:163px;height:20px;background:#000;"></div>
<div style="left:544px;top:219px;width:10px;height:16px;background:#00aaff;"></div>
<div style="left:556px;top:219px;width:10px;height:16px;background:#0000ff;"></div>
<div style="left:570px;top:219px;width:11px;height:16px;background:#0000ff;"></div>
<div style="left:583px;top:219px;width:13px;height:16px;background:#0055ff;"></div>
<div style="left:603px;top:219px;width:10px;height:16px;background:#555500;"></div>
<div style="left:615px;top:219px;width:6px;height:16px;background:#aa5500;"></div>
<div style="left:631px;top:219px;width:7px;height:16px;background:#aa5500;"></div>
<div style="left:640px;top:219px;width:8px;height:16px;background:#555500;"></div>
<div style="left:654px;top:219px;width:13px;height:16px;background:#0055ff;"></div>
<div style="left:673px;top:219px;width:13px;height:16px;background:#0055ff;"></div>
<div style="left:693px;top:219px;width:10px;height:16px;background:#555500;"></div>
<div style="left:289px;top:240px;width:71px;height:23px;background:#80ffb3;"></div>
<div style="left:361px;top:240px;width:57px;height:23px;background:#535353;"></div>
<div style="left:0px;top:263px;width:903px;height:1px;background:#d9d9d9;"></div>
<span class="t" style="left:2px;top:243.5px;height:16px;line-height:16px;font-weight:bold;letter-spacing:0.524px;">11114</span>
<span class="t" style="left:50px;top:243.5px;height:16px;line-height:16px;letter-spacing:-0.473px;">11, 12, 13, 41, 42</span>
<span class="t" style="left:141px;top:243.5px;height:16px;line-height:16px;letter-spacing:0.117px;">Montag-Freitag</span>
<span class="t" style="left:292px;top:243.5px;height:16px;line-height:16px;letter-spacing:-0.440px;">06:38 - 14:35</span>
<span class="t" style="left:364px;top:243.5px;height:16px;line-height:16px;color:#fff;letter-spacing:-0.606px;">07:57</span>
<div style="left:552px;top:241px;width:163px;height:20px;background:#000;"></div>
<div style="left:554px;top:243px;width:10px;height:16px;background:#00aaff;"></div>
<div style="left:566px;top:243px;width:10px;height:16px;background:#0000ff;"></div>
<div style="left:580px;top:243px;width:11px;height:16px;background:#0000ff;"></div>
<div style="left:593px;top:243px;width:13px;height:16px;background:#0055ff;"></div>
<div style="left:613px;top:243px;width:10px;height:16px;background:#555500;"></div>
<div style="left:625px;top:243px;width:6px;height:16px;background:#aa5500;"></div>
<div style="left:641px;top:243px;width:7px;height:16px;background:#aa5500;"></div>
<div style="left:650px;top:243px;width:8px;height:16px;background:#555500;"></div>
<div style="left:664px;top:243px;width:13px;height:16px;background:#0055ff;"></div>
<div style="left:683px;top:243px;width:13px;height:16px;background:#0055ff;"></div>
<div style="left:703px;top:243px;width:10px;height:16px;background:#555500;"></div>
<div style="left:289px;top:264px;width:71px;height:23px;background:#eaff80;"></div>
<div style="left:361px;top:264px;width:57px;height:23px;background:#5c5c5c;"></div>
<div style="left:0px;top:287px;width:903px;height:1px;background:#d9d9d9;"></div>
<span class="t" style="left:2px;top:267.5px;height:16px;line-height:16px;font-weight:bold;letter-spacing:0.259px;">11201</span>
<span class="t" style="left:50px;top:267.5px;height:16px;line-height:16px;letter-spacing:-0.473px;">11, 12, 13, 41, 42</span>
<span class="t" style="left:141px;top:267.5px;height:16px;line-height:16px;letter-spacing:0.117px;">Montag-Freitag</span>
<span class="t" style="left:292px;top:267.5px;height:16px;line-height:16px;letter-spacing:-0.372px;">11:48 - 19:21</span>
<span class="t" style="left:364px;top:267.5px;height:16px;line-height:16px;color:#fff;letter-spacing:-0.606px;">07:33</span>
<div style="left:656px;top:265px;width:155px;height:20px;background:#000;"></div>
<div style="left:658px;top:267px;width:9px;height:16px;background:#0000ff;"></div>
<div style="left:672px;top:267px;width:10px;height:16px;background:#0000ff;"></div>
<div style="left:686px;top:267px;width:10px;height:16px;background:#0000ff;"></div>
<div style="left:700px;top:267px;width:11px;height:16px;background:#0000ff;"></div>
<div style="left:713px;top:267px;width:13px;height:16px;background:#0055ff;"></div>
<div style="left:733px;top:267px;width:10px;height:16px;background:#555500;"></div>
<div style="left:745px;top:267px;width:6px;height:16px;background:#aa5500;"></div>
<div style="left:761px;top:267px;width:7px;height:16px;background:#aa5500;"></div>
<div style="left:770px;top:267px;width:8px;height:16px;background:#555500;"></div>
<div style="left:784px;top:267px;width:13px;height:16px;background:#0055ff;"></div>
<div style="left:799px;top:267px;width:10px;height:16px;background:#00aaff;"></div>
<div style="left:289px;top:288px;width:71px;height:23px;background:#ffea80;"></div>
<div style="left:361px;top:288px;width:57px;height:23px;background:#535353;"></div>
<div style="left:0px;top:311px;width:903px;height:1px;background:#d9d9d9;"></div>
<span class="t" style="left:2px;top:291.5px;height:16px;line-height:16px;font-weight:bold;letter-spacing:0.259px;">11202</span>
<span class="t" style="left:50px;top:291.5px;height:16px;line-height:16px;letter-spacing:-0.473px;">11, 12, 13, 41, 42</span>
<span class="t" style="left:141px;top:291.5px;height:16px;line-height:16px;letter-spacing:0.117px;">Montag-Freitag</span>
<span class="t" style="left:292px;top:291.5px;height:16px;line-height:16px;letter-spacing:-0.440px;">12:39 - 20:36</span>
<span class="t" style="left:364px;top:291.5px;height:16px;line-height:16px;color:#fff;letter-spacing:-0.606px;">07:57</span>
<div style="left:673px;top:289px;width:163px;height:20px;background:#000;"></div>
<div style="left:675px;top:291px;width:6px;height:16px;background:#aa5500;"></div>
<div style="left:691px;top:291px;width:7px;height:16px;background:#aa5500;"></div>
<div style="left:700px;top:291px;width:8px;height:16px;background:#555500;"></div>
<div style="left:714px;top:291px;width:13px;height:16px;background:#0055ff;"></div>
<div style="left:729px;top:291px;width:10px;height:16px;background:#00aaff;"></div>
<div style="left:744px;top:291px;width:10px;height:16px;background:#00aaff;"></div>
<div style="left:756px;top:291px;width:10px;height:16px;background:#0000ff;"></div>
<div style="left:770px;top:291px;width:11px;height:16px;background:#0000ff;"></div>
<div style="left:783px;top:291px;width:13px;height:16px;background:#0055ff;"></div>
<div style="left:803px;top:291px;width:10px;height:16px;background:#555500;"></div>
<div style="left:815px;top:291px;width:6px;height:16px;background:#aa5500;"></div>
<div style="left:826px;top:291px;width:8px;height:16px;background:#aa5500;"></div>
<div style="left:289px;top:312px;width:71px;height:23px;background:#d9ff80;"></div>
<div style="left:361px;top:312px;width:57px;height:23px;background:#919191;"></div>
<div style="left:0px;top:335px;width:903px;height:1px;background:#d9d9d9;"></div>
<span class="t" style="left:2px;top:315.5px;height:16px;line-height:16px;font-weight:bold;letter-spacing:0.259px;">11203</span>
<span class="t" style="left:50px;top:315.5px;height:16px;line-height:16px;letter-spacing:-0.473px;">11, 12, 13, 41, 42</span>
<span class="t" style="left:141px;top:315.5px;height:16px;line-height:16px;letter-spacing:0.117px;">Montag-Freitag</span>
<span class="t" style="left:292px;top:315.5px;height:16px;line-height:16px;letter-spacing:-0.440px;">13:38 - 18:50</span>
<span class="t" style="left:364px;top:315.5px;height:16px;line-height:16px;color:#000;letter-spacing:-0.606px;">05:12</span>
<div style="left:692px;top:313px;width:108px;height:20px;background:#000;"></div>
<div style="left:694px;top:315px;width:10px;height:16px;background:#00aaff;"></div>
<div style="left:706px;top:315px;width:10px;height:16px;background:#0000ff;"></div>
<div style="left:720px;top:315px;width:11px;height:16px;background:#0000ff;"></div>
<div style="left:733px;top:315px;width:13px;height:16px;background:#0055ff;"></div>
<div style="left:753px;top:315px;width:10px;height:16px;background:#555500;"></div>
<div style="left:765px;top:315px;width:6px;height:16px;background:#aa5500;"></div>
<div style="left:781px;top:315px;width:7px;height:16px;background:#aa5500;"></div>
<div style="left:790px;top:315px;width:8px;height:16px;background:#555500;"></div>
<div style="left:289px;top:336px;width:71px;height:23px;background:#fff780;"></div>
<div style="left:361px;top:336px;width:57px;height:23px;background:#747474;"></div>
<div style="left:0px;top:359px;width:903px;height:1px;background:#d9d9d9;"></div>
<span class="t" style="left:2px;top:339.5px;height:16px;line-height:16px;font-weight:bold;letter-spacing:0.259px;">11204</span>
<span class="t" style="left:50px;top:339.5px;height:16px;line-height:16px;letter-spacing:-0.528px;">12, 13, 41, 42</span>
<span class="t" style="left:141px;top:339.5px;height:16px;line-height:16px;letter-spacing:0.117px;">Montag-Freitag</span>
<span class="t" style="left:292px;top:339.5px;height:16px;line-height:16px;letter-spacing:-0.440px;">13:43 - 20:13</span>
<span class="t" style="left:364px;top:339.5px;height:16px;line-height:16px;color:#fff;letter-spacing:-0.606px;">06:30</span>
<div style="left:694px;top:337px;width:134px;height:20px;background:#000;"></div>
<div style="left:696px;top:339px;width:10px;height:16px;background:#0000ff;"></div>
<div style="left:710px;top:339px;width:11px;height:16px;background:#0000ff;"></div>
<div style="left:723px;top:339px;width:13px;height:16px;background:#0055ff;"></div>
<div style="left:743px;top:339px;width:10px;height:16px;background:#555500;"></div>
<div style="left:755px;top:339px;width:6px;height:16px;background:#aa5500;"></div>
<div style="left:771px;top:339px;width:7px;height:16px;background:#aa5500;"></div>
<div style="left:780px;top:339px;width:8px;height:16px;background:#555500;"></div>
<div style="left:794px;top:339px;width:13px;height:16px;background:#0055ff;"></div>
<div style="left:813px;top:339px;width:13px;height:16px;background:#0055ff;"></div>
<div style="left:289px;top:360px;width:71px;height:23px;background:#daff80;"></div>
<div style="left:361px;top:360px;width:57px;height:23px;background:#7e7e7e;"></div>
<div style="left:0px;top:383px;width:903px;height:1px;background:#d9d9d9;"></div>
<span class="t" style="left:2px;top:363.5px;height:16px;line-height:16px;font-weight:bold;letter-spacing:0.259px;">11205</span>
<span class="t" style="left:50px;top:363.5px;height:16px;line-height:16px;letter-spacing:-0.473px;">11, 12, 13, 41, 42</span>
<span class="t" style="left:141px;top:363.5px;height:16px;line-height:16px;letter-spacing:0.117px;">Montag-Freitag</span>
<span class="t" style="left:292px;top:363.5px;height:16px;line-height:16px;letter-spacing:-0.440px;">12:48 - 18:51</span>
<span class="t" style="left:364px;top:363.5px;height:16px;line-height:16px;color:#fff;letter-spacing:-0.606px;">06:03</span>
<div style="left:676px;top:361px;width:125px;height:20px;background:#000;"></div>
<div style="left:678px;top:363px;width:9px;height:16px;background:#0000ff;"></div>
<div style="left:690px;top:363px;width:11px;height:16px;background:#0000ff;"></div>
<div style="left:703px;top:363px;width:13px;height:16px;background:#0055ff;"></div>
<div style="left:723px;top:363px;width:10px;height:16px;background:#555500;"></div>
<div style="left:735px;top:363px;width:6px;height:16px;background:#aa5500;"></div>
<div style="left:751px;top:363px;width:7px;height:16px;background:#aa5500;"></div>
<div style="left:760px;top:363px;width:8px;height:16px;background:#555500;"></div>
<div style="left:774px;top:363px;width:13px;height:16px;background:#0055ff;"></div>
<div style="left:789px;top:363px;width:10px;height:16px;background:#00aaff;"></div>
<div style="left:289px;top:384px;width:71px;height:23px;background:#fff080;"></div>
<div style="left:361px;top:384px;width:57px;height:23px;background:#737373;"></div>
<div style="left:0px;top:407px;width:903px;height:1px;background:#d9d9d9;"></div>
<span class="t" style="left:2px;top:387.5px;height:16px;line-height:16px;font-weight:bold;letter-spacing:0.259px;">11206</span>
<span class="t" style="left:50px;top:387.5px;height:16px;line-height:16px;letter-spacing:-0.473px;">11, 12, 13, 41, 42</span>
<span class="t" style="left:141px;top:387.5px;height:16px;line-height:16px;letter-spacing:0.117px;">Montag-Freitag</span>
<span class="t" style="left:292px;top:387.5px;height:16px;line-height:16px;letter-spacing:-0.440px;">13:53 - 20:25</span>
<span class="t" style="left:364px;top:387.5px;height:16px;line-height:16px;color:#fff;letter-spacing:-0.606px;">06:32</span>
<div style="left:697px;top:385px;width:135px;height:20px;background:#000;"></div>
<div style="left:699px;top:387px;width:10px;height:16px;background:#00aaff;"></div>
<div style="left:714px;top:387px;width:10px;height:16px;background:#00aaff;"></div>
<div style="left:726px;top:387px;width:10px;height:16px;background:#0000ff;"></div>
<div style="left:740px;top:387px;width:11px;height:16px;background:#0000ff;"></div>
<div style="left:753px;top:387px;width:13px;height:16px;background:#0055ff;"></div>
<div style="left:773px;top:387px;width:10px;height:16px;background:#555500;"></div>
<div style="left:785px;top:387px;width:6px;height:16px;background:#aa5500;"></div>
<div style="left:801px;top:387px;width:7px;height:16px;background:#aa5500;"></div>
<div style="left:810px;top:387px;width:8px;height:16px;background:#555500;"></div>
<div style="left:819px;top:387px;width:11px;height:16px;background:#0055ff;"></div>
<div style="left:289px;top:408px;width:71px;height:23px;background:#ff9980;"></div>
<div style="left:361px;top:408px;width:57px;height:23px;background:#434343;"></div>
<div style="left:0px;top:431px;width:903px;height:1px;background:#d9d9d9;"></div>
<span class="t" style="left:2px;top:411.5px;height:16px;line-height:16px;font-weight:bold;letter-spacing:0.259px;">11207</span>
<span class="t" style="left:50px;top:411.5px;height:16px;line-height:16px;letter-spacing:-0.473px;">11, 12, 13, 41, 42</span>
<span class="t" style="left:141px;top:411.5px;height:16px;line-height:16px;letter-spacing:0.117px;">Montag-Freitag</span>
<span class="t" style="left:292px;top:411.5px;height:16px;line-height:16px;letter-spacing:-0.440px;">14:23 - 23:03</span>
<span class="t" style="left:364px;top:411.5px;height:16px;line-height:16px;color:#fff;letter-spacing:-0.606px;">08:40</span>
<div style="left:707px;top:409px;width:178px;height:20px;background:#000;"></div>
<div style="left:709px;top:411px;width:10px;height:16px;background:#00aaff;"></div>
<div style="left:724px;top:411px;width:10px;height:16px;background:#00aaff;"></div>
<div style="left:736px;top:411px;width:10px;height:16px;background:#0000ff;"></div>
<div style="left:750px;top:411px;width:11px;height:16px;background:#0000ff;"></div>
<div style="left:763px;top:411px;width:13px;height:16px;background:#0055ff;"></div>
<div style="left:783px;top:411px;width:10px;height:16px;background:#555500;"></div>
<div style="left:795px;top:411px;width:6px;height:16px;background:#aa5500;"></div>
<div style="left:811px;top:411px;width:7px;height:16px;background:#aa5500;"></div>
<div style="left:820px;top:411px;width:8px;height:16px;background:#555500;"></div>
<div style="left:829px;top:411px;width:24px;height:16px;background:#0055ff;"></div>
<div style="left:859px;top:411px;width:24px;height:16px;background:#0055ff;"></div>
<div style="left:289px;top:432px;width:71px;height:23px;background:#fffc80;"></div>
<div style="left:361px;top:432px;width:57px;height:23px;background:#808080;"></div>
<div style="left:0px;top:455px;width:903px;height:1px;background:#d9d9d9;"></div>
<span class="t" style="left:2px;top:435.5px;height:16px;line-height:16px;font-weight:bold;letter-spacing:0.259px;">11208</span>
<span class="t" style="left:50px;top:435.5px;height:16px;line-height:16px;letter-spacing:-0.473px;">11, 12, 13, 41, 42</span>
<span class="t" style="left:141px;top:435.5px;height:16px;line-height:16px;letter-spacing:0.117px;">Montag-Freitag</span>
<span class="t" style="left:292px;top:435.5px;height:16px;line-height:16px;letter-spacing:-0.440px;">14:08 - 20:05</span>
<span class="t" style="left:364px;top:435.5px;height:16px;line-height:16px;color:#000;letter-spacing:-0.606px;">05:57</span>
<div style="left:702px;top:433px;width:123px;height:20px;background:#000;"></div>
<div style="left:704px;top:435px;width:10px;height:16px;background:#00aaff;"></div>
<div style="left:716px;top:435px;width:10px;height:16px;background:#0000ff;"></div>
<div style="left:730px;top:435px;width:11px;height:16px;background:#0000ff;"></div>
<div style="left:743px;top:435px;width:13px;height:16px;background:#0055ff;"></div>
<div style="left:763px;top:435px;width:10px;height:16px;background:#555500;"></div>
<div style="left:775px;top:435px;width:6px;height:16px;background:#aa5500;"></div>
<div style="left:791px;top:435px;width:7px;height:16px;background:#aa5500;"></div>
<div style="left:800px;top:435px;width:8px;height:16px;background:#555500;"></div>
<div style="left:813px;top:435px;width:10px;height:16px;background:#555500;"></div>
<div style="left:289px;top:456px;width:71px;height:23px;background:#ccff80;"></div>
<div style="left:361px;top:456px;width:57px;height:23px;background:#6b6b6b;"></div>
<div style="left:0px;top:479px;width:903px;height:1px;background:#d9d9d9;"></div>
<span class="t" style="left:2px;top:459.5px;height:16px;line-height:16px;font-weight:bold;letter-spacing:0.259px;">11209</span>
<span class="t" style="left:50px;top:459.5px;height:16px;line-height:16px;letter-spacing:-0.473px;">11, 12, 13, 41, 42</span>
<span class="t" style="left:141px;top:459.5px;height:16px;line-height:16px;letter-spacing:0.117px;">Montag-Freitag</span>
<span class="t" style="left:292px;top:459.5px;height:16px;line-height:16px;letter-spacing:-0.372px;">11:33 - 18:27</span>
<span class="t" style="left:364px;top:459.5px;height:16px;line-height:16px;color:#fff;letter-spacing:-0.606px;">06:54</span>
<div style="left:651px;top:457px;width:142px;height:20px;background:#000;"></div>
<div style="left:653px;top:459px;width:13px;height:16px;background:#0055ff;"></div>
<div style="left:673px;top:459px;width:10px;height:16px;background:#555500;"></div>
<div style="left:685px;top:459px;width:6px;height:16px;background:#aa5500;"></div>
<div style="left:701px;top:459px;width:7px;height:16px;background:#aa5500;"></div>
<div style="left:710px;top:459px;width:8px;height:16px;background:#555500;"></div>
<div style="left:724px;top:459px;width:13px;height:16px;background:#0055ff;"></div>
<div style="left:739px;top:459px;width:10px;height:16px;background:#00aaff;"></div>
<div style="left:754px;top:459px;width:10px;height:16px;background:#00aaff;"></div>
<div style="left:766px;top:459px;width:10px;height:16px;background:#0000ff;"></div>
<div style="left:780px;top:459px;width:11px;height:16px;background:#0000ff;"></div>
<div style="left:289px;top:480px;width:71px;height:23px;background:#ffc980;"></div>
<div style="left:361px;top:480px;width:57px;height:23px;background:#515151;"></div>
<div style="left:0px;top:503px;width:903px;height:1px;background:#d9d9d9;"></div>
<span class="t" style="left:2px;top:483.5px;height:16px;line-height:16px;font-weight:bold;letter-spacing:0.259px;">11210</span>
<span class="t" style="left:50px;top:483.5px;height:16px;line-height:16px;letter-spacing:-0.473px;">11, 12, 13, 41, 42</span>
<span class="t" style="left:141px;top:483.5px;height:16px;line-height:16px;letter-spacing:0.117px;">Montag-Freitag</span>
<span class="t" style="left:292px;top:483.5px;height:16px;line-height:16px;letter-spacing:-0.440px;">13:33 - 21:37</span>
<span class="t" style="left:364px;top:483.5px;height:16px;line-height:16px;color:#fff;letter-spacing:-0.606px;">08:04</span>
<div style="left:691px;top:481px;width:165px;height:20px;background:#000;"></div>
<div style="left:693px;top:483px;width:13px;height:16px;background:#0055ff;"></div>
<div style="left:713px;top:483px;width:10px;height:16px;background:#555500;"></div>
<div style="left:725px;top:483px;width:6px;height:16px;background:#aa5500;"></div>
<div style="left:741px;top:483px;width:7px;height:16px;background:#aa5500;"></div>
<div style="left:750px;top:483px;width:8px;height:16px;background:#555500;"></div>
<div style="left:764px;top:483px;width:13px;height:16px;background:#0055ff;"></div>
<div style="left:779px;top:483px;width:10px;height:16px;background:#00aaff;"></div>
<div style="left:794px;top:483px;width:10px;height:16px;background:#00aaff;"></div>
<div style="left:808px;top:483px;width:9px;height:16px;background:#0000ff;"></div>
<div style="left:827px;top:483px;width:12px;height:16px;background:#0000ff;"></div>
<div style="left:843px;top:483px;width:11px;height:16px;background:#0000ff;"></div>
<div style="left:289px;top:504px;width:71px;height:23px;background:#fffb80;"></div>
<div style="left:361px;top:504px;width:57px;height:23px;background:#6f6f6f;"></div>
<div style="left:0px;top:527px;width:903px;height:1px;background:#d9d9d9;"></div>
<span class="t" style="left:2px;top:507.5px;height:16px;line-height:16px;font-weight:bold;letter-spacing:0.392px;">11211</span>
<span class="t" style="left:50px;top:507.5px;height:16px;line-height:16px;letter-spacing:-0.473px;">11, 12, 13, 41, 42</span>
<span class="t" style="left:141px;top:507.5px;height:16px;line-height:16px;letter-spacing:0.117px;">Montag-Freitag</span>
<span class="t" style="left:292px;top:507.5px;height:16px;line-height:16px;letter-spacing:-0.440px;">13:24 - 20:06</span>
<span class="t" style="left:364px;top:507.5px;height:16px;line-height:16px;color:#fff;letter-spacing:-0.606px;">06:42</span>
<div style="left:688px;top:505px;width:138px;height:20px;background:#000;"></div>
<div style="left:690px;top:507px;width:8px;height:16px;background:#555500;"></div>
<div style="left:704px;top:507px;width:13px;height:16px;background:#0055ff;"></div>
<div style="left:719px;top:507px;width:10px;height:16px;background:#00aaff;"></div>
<div style="left:734px;top:507px;width:10px;height:16px;background:#00aaff;"></div>
<div style="left:746px;top:507px;width:10px;height:16px;background:#0000ff;"></div>
<div style="left:760px;top:507px;width:11px;height:16px;background:#0000ff;"></div>
<div style="left:773px;top:507px;width:13px;height:16px;background:#0055ff;"></div>
<div style="left:793px;top:507px;width:10px;height:16px;background:#555500;"></div>
<div style="left:805px;top:507px;width:6px;height:16px;background:#aa5500;"></div>
<div style="left:816px;top:507px;width:8px;height:16px;background:#aa5500;"></div>
<div style="left:289px;top:528px;width:71px;height:23px;background:#f6ff80;"></div>
<div style="left:361px;top:528px;width:57px;height:23px;background:#7e7e7e;"></div>
<div style="left:0px;top:551px;width:903px;height:1px;background:#d9d9d9;"></div>
<span class="t" style="left:2px;top:531.5px;height:16px;line-height:16px;font-weight:bold;letter-spacing:0.259px;">11212</span>
<span class="t" style="left:50px;top:531.5px;height:16px;line-height:16px;letter-spacing:-0.473px;">11, 12, 13, 41, 42</span>
<span class="t" style="left:141px;top:531.5px;height:16px;line-height:16px;letter-spacing:0.117px;">Montag-Freitag</span>
<span class="t" style="left:292px;top:531.5px;height:16px;line-height:16px;letter-spacing:-0.440px;">13:39 - 19:43</span>
<span class="t" style="left:364px;top:531.5px;height:16px;line-height:16px;color:#fff;letter-spacing:-0.606px;">06:04</span>
<div style="left:693px;top:529px;width:125px;height:20px;background:#000;"></div>
<div style="left:695px;top:531px;width:6px;height:16px;background:#aa5500;"></div>
<div style="left:711px;top:531px;width:7px;height:16px;background:#aa5500;"></div>
<div style="left:720px;top:531px;width:8px;height:16px;background:#555500;"></div>
<div style="left:734px;top:531px;width:13px;height:16px;background:#0055ff;"></div>
<div style="left:749px;top:531px;width:10px;height:16px;background:#00aaff;"></div>
<div style="left:764px;top:531px;width:10px;height:16px;background:#00aaff;"></div>
<div style="left:776px;top:531px;width:10px;height:16px;background:#0000ff;"></div>
<div style="left:790px;top:531px;width:11px;height:16px;background:#0000ff;"></div>
<div style="left:803px;top:531px;width:13px;height:16px;background:#0055ff;"></div>
<div style="left:289px;top:552px;width:71px;height:23px;background:#ffd180;"></div>
<div style="left:361px;top:552px;width:57px;height:23px;background:#646464;"></div>
<div style="left:0px;top:575px;width:903px;height:1px;background:#d9d9d9;"></div>
<span class="t" style="left:2px;top:555.5px;height:16px;line-height:16px;font-weight:bold;letter-spacing:0.259px;">11213</span>
<span class="t" style="left:50px;top:555.5px;height:16px;line-height:16px;letter-spacing:-0.473px;">11, 12, 13, 41, 42</span>
<span class="t" style="left:141px;top:555.5px;height:16px;line-height:16px;letter-spacing:0.117px;">Montag-Freitag</span>
<span class="t" style="left:292px;top:555.5px;height:16px;line-height:16px;letter-spacing:-0.440px;">14:09 - 21:22</span>
<span class="t" style="left:364px;top:555.5px;height:16px;line-height:16px;color:#fff;letter-spacing:-0.606px;">07:13</span>
<div style="left:703px;top:553px;width:148px;height:20px;background:#000;"></div>
<div style="left:705px;top:555px;width:6px;height:16px;background:#aa5500;"></div>
<div style="left:721px;top:555px;width:7px;height:16px;background:#aa5500;"></div>
<div style="left:730px;top:555px;width:8px;height:16px;background:#555500;"></div>
<div style="left:744px;top:555px;width:13px;height:16px;background:#0055ff;"></div>
<div style="left:759px;top:555px;width:10px;height:16px;background:#00aaff;"></div>
<div style="left:774px;top:555px;width:10px;height:16px;background:#00aaff;"></div>
<div style="left:786px;top:555px;width:10px;height:16px;background:#0000ff;"></div>
<div style="left:802px;top:555px;width:10px;height:16px;background:#0000ff;"></div>
<div style="left:823px;top:555px;width:11px;height:16px;background:#0000ff;"></div>
<div style="left:837px;top:555px;width:12px;height:16px;background:#0000ff;"></div>
<div style="left:289px;top:576px;width:71px;height:23px;background:#ffd980;"></div>
<div style="left:361px;top:576px;width:57px;height:23px;background:#757575;"></div>
<div style="left:0px;top:599px;width:903px;height:1px;background:#d9d9d9;"></div>
<span class="t" style="left:2px;top:579.5px;height:16px;line-height:16px;font-weight:bold;letter-spacing:0.259px;">11214</span>
<span class="t" style="left:50px;top:579.5px;height:16px;line-height:16px;letter-spacing:-0.473px;">11, 12, 13, 41, 42</span>
<span class="t" style="left:141px;top:579.5px;height:16px;line-height:16px;letter-spacing:0.117px;">Montag-Freitag</span>
<span class="t" style="left:292px;top:579.5px;height:16px;line-height:16px;letter-spacing:-0.440px;">14:39 - 21:07</span>
<span class="t" style="left:364px;top:579.5px;height:16px;line-height:16px;color:#fff;letter-spacing:-0.606px;">06:28</span>
<div style="left:713px;top:577px;width:133px;height:20px;background:#000;"></div>
<div style="left:715px;top:579px;width:6px;height:16px;background:#aa5500;"></div>
<div style="left:731px;top:579px;width:7px;height:16px;background:#aa5500;"></div>
<div style="left:740px;top:579px;width:8px;height:16px;background:#555500;"></div>
<div style="left:754px;top:579px;width:13px;height:16px;background:#0055ff;"></div>
<div style="left:769px;top:579px;width:10px;height:16px;background:#00aaff;"></div>
<div style="left:784px;top:579px;width:10px;height:16px;background:#00aaff;"></div>
<div style="left:796px;top:579px;width:10px;height:16px;background:#0000ff;"></div>
<div style="left:817px;top:579px;width:12px;height:16px;background:#0000ff;"></div>
<div style="left:833px;top:579px;width:11px;height:16px;background:#0000ff;"></div>
<div style="left:289px;top:600px;width:71px;height:23px;background:#ff8980;"></div>
<div style="left:361px;top:600px;width:57px;height:23px;background:#959595;"></div>
<div style="left:0px;top:623px;width:903px;height:1px;background:#d9d9d9;"></div>
<span class="t" style="left:2px;top:603.5px;height:16px;line-height:16px;font-weight:bold;letter-spacing:0.259px;">11401</span>
<span class="t" style="left:50px;top:603.5px;height:16px;line-height:16px;letter-spacing:-1.173px;">12</span>
<span class="t" style="left:141px;top:603.5px;height:16px;line-height:16px;letter-spacing:0.117px;">Montag-Freitag</span>
<span class="t" style="left:292px;top:603.5px;height:16px;line-height:16px;letter-spacing:-0.440px;">18:33 - 23:33</span>
<span class="t" style="left:364px;top:603.5px;height:16px;line-height:16px;color:#000;letter-spacing:-0.606px;">05:00</span>
<div style="left:791px;top:601px;width:104px;height:20px;background:#000;"></div>
<div style="left:793px;top:603px;width:13px;height:16px;background:#0055ff;"></div>
<div style="left:809px;top:603px;width:24px;height:16px;background:#0055ff;"></div>
<div style="left:839px;top:603px;width:24px;height:16px;background:#0055ff;"></div>
<div style="left:869px;top:603px;width:24px;height:16px;background:#0055ff;"></div>
<div style="left:289px;top:624px;width:71px;height:23px;background:#ff8080;"></div>
<div style="left:361px;top:624px;width:57px;height:23px;background:#b4b4b4;"></div>
<div style="left:0px;top:647px;width:903px;height:1px;background:#d9d9d9;"></div>
<span class="t" style="left:2px;top:627.5px;height:16px;line-height:16px;font-weight:bold;letter-spacing:0.259px;">11402</span>
<span class="t" style="left:50px;top:627.5px;height:16px;line-height:16px;letter-spacing:-1.173px;">12</span>
<span class="t" style="left:141px;top:627.5px;height:16px;line-height:16px;letter-spacing:0.117px;">Montag-Freitag</span>
<span class="t" style="left:292px;top:627.5px;height:16px;line-height:16px;letter-spacing:-0.440px;">20:25 - 00:03</span>
<span class="t" style="left:364px;top:627.5px;height:16px;line-height:16px;color:#000;letter-spacing:-0.606px;">03:38</span>
<div style="left:828px;top:625px;width:87px;height:20px;background:#000;"></div>
<div style="left:830px;top:627px;width:13px;height:16px;background:#0055ff;"></div>
<div style="left:849px;top:627px;width:24px;height:16px;background:#0055ff;"></div>
<div style="left:879px;top:627px;width:36px;height:16px;background:#0055ff;"></div>
<div style="left:289px;top:648px;width:71px;height:23px;background:#80f9ff;"></div>
<div style="left:361px;top:648px;width:57px;height:23px;background:#656565;"></div>
<div style="left:0px;top:671px;width:903px;height:1px;background:#d9d9d9;"></div>
<span class="t" style="left:2px;top:651.5px;height:16px;line-height:16px;font-weight:bold;letter-spacing:-0.116px;">12101F</span>
<span class="t" style="left:50px;top:651.5px;height:16px;line-height:16px;letter-spacing:-0.560px;">21, 22</span>
<span class="t" style="left:141px;top:651.5px;height:16px;line-height:16px;letter-spacing:-0.054px;">Montag-Freitag, Ferientage</span>
<span class="t" style="left:292px;top:651.5px;height:16px;line-height:16px;letter-spacing:-0.440px;">04:55 - 12:06</span>
<span class="t" style="left:364px;top:651.5px;height:16px;line-height:16px;color:#fff;letter-spacing:-0.427px;">07:11</span>
<div style="left:518px;top:649px;width:148px;height:20px;background:#000;"></div>
<div style="left:520px;top:651px;width:9px;height:16px;background:#00aa00;"></div>
<div style="left:531px;top:651px;width:8px;height:16px;background:#00aa00;"></div>
<div style="left:546px;top:651px;width:6px;height:16px;background:#55aa00;"></div>
<div style="left:558px;top:651px;width:6px;height:16px;background:#55aa00;"></div>
<div style="left:570px;top:651px;width:8px;height:16px;background:#00aa00;"></div>
<div style="left:582px;top:651px;width:7px;height:16px;background:#00aa00;"></div>
<div style="left:596px;top:651px;width:6px;height:16px;background:#55aa00;"></div>
<div style="left:608px;top:651px;width:6px;height:16px;background:#55aa00;"></div>
<div style="left:620px;top:651px;width:9px;height:16px;background:#00aa00;"></div>
<div style="left:631px;top:651px;width:8px;height:16px;background:#00aa00;"></div>
<div style="left:646px;top:651px;width:6px;height:16px;background:#55aa00;"></div>
<div style="left:658px;top:651px;width:6px;height:16px;background:#55aa00;"></div>
<div style="left:289px;top:672px;width:71px;height:23px;background:#80f9ff;"></div>
<div style="left:361px;top:672px;width:57px;height:23px;background:#656565;"></div>
<div style="left:0px;top:695px;width:903px;height:1px;background:#d9d9d9;"></div>
<span class="t" style="left:2px;top:675.5px;height:16px;line-height:16px;font-weight:bold;letter-spacing:-0.229px;">12101S</span>
<span class="t" style="left:50px;top:675.5px;height:16px;line-height:16px;letter-spacing:-0.560px;">21, 22</span>
<span class="t" style="left:141px;top:675.5px;height:16px;line-height:16px;letter-spacing:-0.016px;">Montag-Freitag, Schultage</span>
<span class="t" style="left:292px;top:675.5px;height:16px;line-height:16px;letter-spacing:-0.440px;">04:55 - 12:06</span>
<span class="t" style="left:364px;top:675.5px;height:16px;line-height:16px;color:#fff;letter-spacing:-0.427px;">07:11</span>
<div style="left:518px;top:673px;width:148px;height:20px;background:#000;"></div>
<div style="left:520px;top:675px;width:9px;height:16px;background:#00aa00;"></div>
<div style="left:531px;top:675px;width:8px;height:16px;background:#00aa00;"></div>
<div style="left:546px;top:675px;width:6px;height:16px;background:#55aa00;"></div>
<div style="left:558px;top:675px;width:6px;height:16px;background:#55aa00;"></div>
<div style="left:570px;top:675px;width:8px;height:16px;background:#00aa00;"></div>
<div style="left:582px;top:675px;width:7px;height:16px;background:#00aa00;"></div>
<div style="left:596px;top:675px;width:6px;height:16px;background:#55aa00;"></div>
<div style="left:608px;top:675px;width:6px;height:16px;background:#55aa00;"></div>
<div style="left:620px;top:675px;width:9px;height:16px;background:#00aa00;"></div>
<div style="left:631px;top:675px;width:8px;height:16px;background:#00aa00;"></div>
<div style="left:646px;top:675px;width:6px;height:16px;background:#55aa00;"></div>
<div style="left:658px;top:675px;width:6px;height:16px;background:#55aa00;"></div>
<div style="left:289px;top:696px;width:71px;height:23px;background:#80fffc;"></div>
<div style="left:361px;top:696px;width:57px;height:23px;background:#656565;"></div>
<div style="left:0px;top:719px;width:903px;height:1px;background:#d9d9d9;"></div>
<span class="t" style="left:2px;top:699.5px;height:16px;line-height:16px;font-weight:bold;letter-spacing:-0.116px;">12102F</span>
<span class="t" style="left:50px;top:699.5px;height:16px;line-height:16px;letter-spacing:-0.560px;">21, 22</span>
<span class="t" style="left:141px;top:699.5px;height:16px;line-height:16px;letter-spacing:-0.054px;">Montag-Freitag, Ferientage</span>
<span class="t" style="left:292px;top:699.5px;height:16px;line-height:16px;letter-spacing:-0.440px;">05:14 - 12:23</span>
<span class="t" style="left:364px;top:699.5px;height:16px;line-height:16px;color:#fff;letter-spacing:-0.606px;">07:09</span>
<div style="left:524px;top:697px;width:147px;height:20px;background:#000;"></div>
<div style="left:526px;top:699px;width:6px;height:16px;background:#55aa00;"></div>
<div style="left:538px;top:699px;width:6px;height:16px;background:#55aa00;"></div>
<div style="left:550px;top:699px;width:8px;height:16px;background:#00aa00;"></div>
<div style="left:562px;top:699px;width:7px;height:16px;background:#00aa00;"></div>
<div style="left:576px;top:699px;width:6px;height:16px;background:#55aa00;"></div>
<div style="left:588px;top:699px;width:6px;height:16px;background:#55aa00;"></div>
<div style="left:600px;top:699px;width:9px;height:16px;background:#00aa00;"></div>
<div style="left:611px;top:699px;width:8px;height:16px;background:#00aa00;"></div>
<div style="left:626px;top:699px;width:6px;height:16px;background:#55aa00;"></div>
<div style="left:638px;top:699px;width:6px;height:16px;background:#55aa00;"></div>
<div style="left:650px;top:699px;width:8px;height:16px;background:#00aa00;"></div>
<div style="left:662px;top:699px;width:7px;height:16px;background:#00aa00;"></div>
<div style="left:289px;top:720px;width:71px;height:23px;background:#80fffc;"></div>
<div style="left:361px;top:720px;width:57px;height:23px;background:#656565;"></div>
<div style="left:0px;top:743px;width:903px;height:1px;background:#d9d9d9;"></div>
<span class="t" style="left:2px;top:723.5px;height:16px;line-height:16px;font-weight:bold;letter-spacing:-0.229px;">12102S</span>
<span class="t" style="left:50px;top:723.5px;height:16px;line-height:16px;letter-spacing:-0.560px;">21, 22</span>
<span class="t" style="left:141px;top:723.5px;height:16px;line-height:16px;letter-spacing:-0.016px;">Montag-Freitag, Schultage</span>
<span class="t" style="left:292px;top:723.5px;height:16px;line-height:16px;letter-spacing:-0.440px;">05:14 - 12:23</span>
<span class="t" style="left:364px;top:723.5px;height:16px;line-height:16px;color:#fff;letter-spacing:-0.606px;">07:09</span>
<div style="left:524px;top:721px;width:147px;height:20px;background:#000;"></div>
<div style="left:526px;top:723px;width:6px;height:16px;background:#55aa00;"></div>
<div style="left:538px;top:723px;width:6px;height:16px;background:#55aa00;"></div>
<div style="left:550px;top:723px;width:8px;height:16px;background:#00aa00;"></div>
<div style="left:562px;top:723px;width:7px;height:16px;background:#00aa00;"></div>
<div style="left:576px;top:723px;width:6px;height:16px;background:#55aa00;"></div>
<div style="left:588px;top:723px;width:6px;height:16px;background:#55aa00;"></div>
<div style="left:600px;top:723px;width:9px;height:16px;background:#00aa00;"></div>
<div style="left:611px;top:723px;width:8px;height:16px;background:#00aa00;"></div>
<div style="left:626px;top:723px;width:6px;height:16px;background:#55aa00;"></div>
<div style="left:638px;top:723px;width:6px;height:16px;background:#55aa00;"></div>
<div style="left:650px;top:723px;width:8px;height:16px;background:#00aa00;"></div>
<div style="left:661px;top:723px;width:8px;height:16px;background:#00aa00;"></div>
<div style="left:289px;top:744px;width:71px;height:23px;background:#80ffeb;"></div>
<div style="left:361px;top:744px;width:57px;height:23px;background:#555555;"></div>
<div style="left:0px;top:767px;width:903px;height:1px;background:#d9d9d9;"></div>
<span class="t" style="left:2px;top:747.5px;height:16px;line-height:16px;font-weight:bold;letter-spacing:-0.116px;">12103F</span>
<span class="t" style="left:50px;top:747.5px;height:16px;line-height:16px;letter-spacing:-0.560px;">21, 22</span>
<span class="t" style="left:141px;top:747.5px;height:16px;line-height:16px;letter-spacing:-0.054px;">Montag-Freitag, Ferientage</span>
<span class="t" style="left:292px;top:747.5px;height:16px;line-height:16px;letter-spacing:-0.440px;">05:00 - 12:53</span>
<span class="t" style="left:364px;top:747.5px;height:16px;line-height:16px;color:#fff;letter-spacing:-0.606px;">07:53</span>
<div style="left:520px;top:745px;width:161px;height:20px;background:#000;"></div>
<div style="left:522px;top:747px;width:7px;height:16px;background:#00aa00;"></div>
<div style="left:536px;top:747px;width:6px;height:16px;background:#55aa00;"></div>
<div style="left:548px;top:747px;width:6px;height:16px;background:#55aa00;"></div>
<div style="left:560px;top:747px;width:9px;height:16px;background:#00aa00;"></div>
<div style="left:571px;top:747px;width:8px;height:16px;background:#00aa00;"></div>
<div style="left:586px;top:747px;width:6px;height:16px;background:#55aa00;"></div>
<div style="left:598px;top:747px;width:6px;height:16px;background:#55aa00;"></div>
<div style="left:610px;top:747px;width:8px;height:16px;background:#00aa00;"></div>
<div style="left:622px;top:747px;width:7px;height:16px;background:#00aa00;"></div>
<div style="left:636px;top:747px;width:6px;height:16px;background:#55aa00;"></div>
<div style="left:648px;top:747px;width:6px;height:16px;background:#55aa00;"></div>
<div style="left:660px;top:747px;width:9px;height:16px;background:#00aa00;"></div>
<div style="left:671px;top:747px;width:8px;height:16px;background:#00aa00;"></div>
<div style="left:46px;top:0px;width:1px;height:759px;background:#d9d9d9;"></div>
<div style="left:137px;top:0px;width:1px;height:759px;background:#d9d9d9;"></div>
<div style="left:288px;top:0px;width:1px;height:759px;background:#d9d9d9;"></div>
<div style="left:360px;top:0px;width:1px;height:759px;background:#d9d9d9;"></div>
<div style="left:418px;top:0px;width:1px;height:759px;background:#d9d9d9;"></div>
<div style="left:902px;top:0px;width:1px;height:759px;background:#d9d9d9;"></div>
</div>
<div class="btn" style="left:892px;top:979px;width:73px;height:22px;"></div>
<span class="t" style="left:906.5px;top:983px;height:16px;line-height:16px;letter-spacing:-0.195px;">Löschen</span>
<div style="left:979px;top:80px;width:941px;height:21px;background:#d9d9d9;border:1px solid #c3c3c3;"></div>
<span class="t" style="left:984px;top:84px;height:16px;line-height:16px;">Aktueller Dienst</span>
<svg style="left:1883px;top:86px" width="8.5" height="8.5" viewBox="0 0 10 10"><g fill="none" stroke="#1a1a1a" stroke-width="1.300"><rect x="0.650" y="3.650" width="5.700" height="5.700"/><path d="M3.300 3.500v-2.850h6v6h-2.800"/></g><rect x="0.650" y="3.650" width="5.700" height="1.800" fill="#1a1a1a"/><rect x="3.300" y="0.650" width="6" height="1.600" fill="#1a1a1a"/></svg>
<svg style="left:1904px;top:86px" width="9" height="9" viewBox="0 0 9 9"><path d="M1 1l7 7M8 1l-7 7" stroke="#1a1a1a" stroke-width="1.800" fill="none"/></svg>
<svg style="left:988px;top:116px" width="13" height="13" viewBox="0 0 13 13"><rect x="0" y="0" width="13" height="13" rx="3" fill="#0a5fc0"/><path d="M3.300 6.600l2.400 2.400l4.300-4.600" fill="none" stroke="#fff" stroke-width="1.100"/></svg>
<span class="t" style="left:1006px;top:115.5px;height:16px;line-height:16px;letter-spacing:-0.029px;">Zeilenhöhe proportional zur Fahrtdauer</span>
<svg style="left:1224px;top:116px" width="13" height="13" viewBox="0 0 13 13"><rect x="0" y="0" width="13" height="13" rx="3" fill="#0a5fc0"/><path d="M3.300 6.600l2.400 2.400l4.300-4.600" fill="none" stroke="#fff" stroke-width="1.100"/></svg>
<span class="t" style="left:1242px;top:115.5px;height:16px;line-height:16px;letter-spacing:-0.166px;">Pausen und Betriebsfahrten anzeigen</span>
<span class="t" style="left:1484px;top:115.5px;height:16px;line-height:16px;letter-spacing:-0.276px;">Skalierung:</span>
<div style="left:1548px;top:120px;width:81px;height:4px;background:#e7e7e7;border:1px solid #d6d6d6;"></div>
<div style="left:1557px;top:112px;width:10px;height:21px;background:#0078d7;"></div>
<div style="left:988px;top:140px;width:641px;height:862px;background:#ffffff;border:1px solid #828790;"></div>
<span class="t" style="left:1003.5px;top:145.5px;height:16px;line-height:16px;letter-spacing:-0.001px;">Zeit</span>
<div class="clip" style="left:1042px;top:142px;width:46px;height:23px;">
<span class="t" style="left:-2px;top:3.5px;height:16px;line-height:16px;letter-spacing:-0.187px;">Fahrtzeit</span>
</div>
<span class="t" style="left:1125.0px;top:145.5px;height:16px;line-height:16px;letter-spacing:-0.202px;">Fahrt</span>
<span class="t" style="left:1363.0px;top:145.5px;height:16px;line-height:16px;letter-spacing:0.037px;">Von-nach</span>
<div style="left:1038px;top:141px;width:1px;height:24px;background:#e5e5e5;"></div>
<div style="left:1088px;top:141px;width:1px;height:24px;background:#e5e5e5;"></div>
<div style="left:1188px;top:141px;width:1px;height:24px;background:#e5e5e5;"></div>
<div style="left:1588px;top:141px;width:1px;height:24px;background:#e5e5e5;"></div>
<div style="left:989px;top:165px;width:49px;height:39px;background:#00aaff;"></div>
<div style="left:1039px;top:165px;width:49px;height:39px;background:#00aaff;"></div>
<div style="left:1089px;top:165px;width:99px;height:39px;background:#00aaff;"></div>
<div style="left:1189px;top:165px;width:399px;height:39px;background:#00aaff;"></div>
<div style="left:989px;top:204px;width:600px;height:1px;background:#c8c8c8;"></div>
<div style="left:1038px;top:165px;width:1px;height:40px;background:#d4d4d4;"></div>
<div style="left:1088px;top:165px;width:1px;height:40px;background:#d4d4d4;"></div>
<div style="left:1188px;top:165px;width:1px;height:40px;background:#d4d4d4;"></div>
<span class="t" style="left:992px;top:168.5px;height:16px;line-height:16px;font-weight:bold;color:#000;letter-spacing:0.062px;">05:38</span>
<span class="t" style="left:992px;top:184.5px;height:16px;line-height:16px;font-weight:bold;color:#000;letter-spacing:0.062px;">06:07</span>
<span class="t" style="left:1042px;top:176.5px;height:16px;line-height:16px;font-weight:bold;color:#000;letter-spacing:-0.050px;">29 min.</span>
<span class="t" style="left:1092px;top:168.5px;height:16px;line-height:16px;font-weight:bold;color:#000;letter-spacing:-0.337px;">11_NSB-SHS</span>
<span class="t" style="left:1092px;top:184.5px;height:16px;line-height:16px;font-weight:bold;color:#000;letter-spacing:-0.367px;">(standard)</span>
<span class="t" style="left:1192px;top:168.5px;height:16px;line-height:16px;font-weight:bold;color:#000;letter-spacing:-0.127px;">Nordspitze, Bauernhof</span>
<span class="t" style="left:1192px;top:184.5px;height:16px;line-height:16px;font-weight:bold;color:#000;letter-spacing:-0.351px;">FH, Sporthochschule</span>
<div style="left:989px;top:205px;width:49px;height:23px;background:#000000;"></div>
<div style="left:1039px;top:205px;width:49px;height:23px;background:#000000;"></div>
<div style="left:1089px;top:205px;width:99px;height:23px;background:#000000;"></div>
<div style="left:1189px;top:205px;width:399px;height:23px;background:#000000;"></div>
<div style="left:989px;top:228px;width:600px;height:1px;background:#c8c8c8;"></div>
<div style="left:1038px;top:205px;width:1px;height:24px;background:#d4d4d4;"></div>
<div style="left:1088px;top:205px;width:1px;height:24px;background:#d4d4d4;"></div>
<div style="left:1188px;top:205px;width:1px;height:24px;background:#d4d4d4;"></div>
<span class="t" style="left:992px;top:208.5px;height:16px;line-height:16px;font-style:italic;color:#fff;letter-spacing:-0.629px;">06:07...</span>
<span class="t" style="left:1042px;top:208.5px;height:16px;line-height:16px;font-style:italic;color:#fff;letter-spacing:-0.280px;">6 min.</span>
<span class="t" style="left:1092px;top:208.5px;height:16px;line-height:16px;font-style:italic;color:#fff;letter-spacing:-0.405px;">Pause</span>
<span class="t" style="left:1192px;top:208.5px;height:16px;line-height:16px;font-style:italic;color:#fff;letter-spacing:-0.319px;">FH, Sporthochschule</span>
<div style="left:989px;top:229px;width:49px;height:39px;background:#0000ff;"></div>
<div style="left:1039px;top:229px;width:49px;height:39px;background:#0000ff;"></div>
<div style="left:1089px;top:229px;width:99px;height:39px;background:#0000ff;"></div>
<div style="left:1189px;top:229px;width:399px;height:39px;background:#0000ff;"></div>
<div style="left:989px;top:268px;width:600px;height:1px;background:#c8c8c8;"></div>
<div style="left:1038px;top:229px;width:1px;height:40px;background:#d4d4d4;"></div>
<div style="left:1088px;top:229px;width:1px;height:40px;background:#d4d4d4;"></div>
<div style="left:1188px;top:229px;width:1px;height:40px;background:#d4d4d4;"></div>
<span class="t" style="left:992px;top:232.5px;height:16px;line-height:16px;font-weight:bold;color:#fff;letter-spacing:0.062px;">06:13</span>
<span class="t" style="left:992px;top:248.5px;height:16px;line-height:16px;font-weight:bold;color:#fff;letter-spacing:0.062px;">06:42</span>
<span class="t" style="left:1042px;top:240.5px;height:16px;line-height:16px;font-weight:bold;color:#fff;letter-spacing:-0.050px;">29 min.</span>
<span class="t" style="left:1092px;top:232.5px;height:16px;line-height:16px;font-weight:bold;color:#fff;letter-spacing:-0.457px;">13_SHS-AFB1</span>
<span class="t" style="left:1092px;top:248.5px;height:16px;line-height:16px;font-weight:bold;color:#fff;letter-spacing:-0.367px;">(standard)</span>
<span class="t" style="left:1192px;top:232.5px;height:16px;line-height:16px;font-weight:bold;color:#fff;letter-spacing:-0.351px;">FH, Sporthochschule</span>
<span class="t" style="left:1192px;top:248.5px;height:16px;line-height:16px;font-weight:bold;color:#fff;letter-spacing:-0.141px;">Ammersfeld, Bahnhof</span>
<div style="left:989px;top:269px;width:49px;height:23px;background:#000000;"></div>
<div style="left:1039px;top:269px;width:49px;height:23px;background:#000000;"></div>
<div style="left:1089px;top:269px;width:99px;height:23px;background:#000000;"></div>
<div style="left:1189px;top:269px;width:399px;height:23px;background:#000000;"></div>
<div style="left:989px;top:292px;width:600px;height:1px;background:#c8c8c8;"></div>
<div style="left:1038px;top:269px;width:1px;height:24px;background:#d4d4d4;"></div>
<div style="left:1088px;top:269px;width:1px;height:24px;background:#d4d4d4;"></div>
<div style="left:1188px;top:269px;width:1px;height:24px;background:#d4d4d4;"></div>
<span class="t" style="left:992px;top:272.5px;height:16px;line-height:16px;font-style:italic;color:#fff;letter-spacing:-0.629px;">06:42...</span>
<span class="t" style="left:1042px;top:272.5px;height:16px;line-height:16px;font-style:italic;color:#fff;letter-spacing:-0.336px;">14 min.</span>
<span class="t" style="left:1092px;top:272.5px;height:16px;line-height:16px;font-style:italic;color:#fff;letter-spacing:-0.405px;">Pause</span>
<span class="t" style="left:1192px;top:272.5px;height:16px;line-height:16px;font-style:italic;color:#fff;letter-spacing:-0.073px;">Ammersfeld, Bahnhof</span>
<div style="left:989px;top:293px;width:49px;height:42px;background:#0000ff;"></div>
<div style="left:1039px;top:293px;width:49px;height:42px;background:#0000ff;"></div>
<div style="left:1089px;top:293px;width:99px;height:42px;background:#0000ff;"></div>
<div style="left:1189px;top:293px;width:399px;height:42px;background:#0000ff;"></div>
<div style="left:989px;top:335px;width:600px;height:1px;background:#c8c8c8;"></div>
<div style="left:1038px;top:293px;width:1px;height:43px;background:#d4d4d4;"></div>
<div style="left:1088px;top:293px;width:1px;height:43px;background:#d4d4d4;"></div>
<div style="left:1188px;top:293px;width:1px;height:43px;background:#d4d4d4;"></div>
<span class="t" style="left:992px;top:298px;height:16px;line-height:16px;font-weight:bold;color:#fff;letter-spacing:0.062px;">06:56</span>
<span class="t" style="left:992px;top:314px;height:16px;line-height:16px;font-weight:bold;color:#fff;letter-spacing:0.062px;">07:27</span>
<span class="t" style="left:1042px;top:306px;height:16px;line-height:16px;font-weight:bold;color:#fff;letter-spacing:-0.050px;">31 min.</span>
<span class="t" style="left:1092px;top:298px;height:16px;line-height:16px;font-weight:bold;color:#fff;letter-spacing:-0.457px;">13_AFB1-SHS</span>
<span class="t" style="left:1092px;top:314px;height:16px;line-height:16px;font-weight:bold;color:#fff;letter-spacing:-0.367px;">(standard)</span>
<span class="t" style="left:1192px;top:298px;height:16px;line-height:16px;font-weight:bold;color:#fff;letter-spacing:-0.141px;">Ammersfeld, Bahnhof</span>
<span class="t" style="left:1192px;top:314px;height:16px;line-height:16px;font-weight:bold;color:#fff;letter-spacing:-0.351px;">FH, Sporthochschule</span>
<div style="left:989px;top:336px;width:49px;height:23px;background:#000000;"></div>
<div style="left:1039px;top:336px;width:49px;height:23px;background:#000000;"></div>
<div style="left:1089px;top:336px;width:99px;height:23px;background:#000000;"></div>
<div style="left:1189px;top:336px;width:399px;height:23px;background:#000000;"></div>
<div style="left:989px;top:359px;width:600px;height:1px;background:#c8c8c8;"></div>
<div style="left:1038px;top:336px;width:1px;height:24px;background:#d4d4d4;"></div>
<div style="left:1088px;top:336px;width:1px;height:24px;background:#d4d4d4;"></div>
<div style="left:1188px;top:336px;width:1px;height:24px;background:#d4d4d4;"></div>
<span class="t" style="left:992px;top:339.5px;height:16px;line-height:16px;font-style:italic;color:#fff;letter-spacing:-0.629px;">07:27...</span>
<span class="t" style="left:1042px;top:339.5px;height:16px;line-height:16px;font-style:italic;color:#fff;letter-spacing:-0.280px;">6 min.</span>
<span class="t" style="left:1092px;top:339.5px;height:16px;line-height:16px;font-style:italic;color:#fff;letter-spacing:-0.405px;">Pause</span>
<span class="t" style="left:1192px;top:339.5px;height:16px;line-height:16px;font-style:italic;color:#fff;letter-spacing:-0.319px;">FH, Sporthochschule</span>
<div style="left:989px;top:360px;width:49px;height:55px;background:#0055ff;"></div>
<div style="left:1039px;top:360px;width:49px;height:55px;background:#0055ff;"></div>
<div style="left:1089px;top:360px;width:99px;height:55px;background:#0055ff;"></div>
<div style="left:1189px;top:360px;width:399px;height:55px;background:#0055ff;"></div>
<div style="left:989px;top:415px;width:600px;height:1px;background:#c8c8c8;"></div>
<div style="left:1038px;top:360px;width:1px;height:56px;background:#d4d4d4;"></div>
<div style="left:1088px;top:360px;width:1px;height:56px;background:#d4d4d4;"></div>
<div style="left:1188px;top:360px;width:1px;height:56px;background:#d4d4d4;"></div>
<span class="t" style="left:992px;top:371.5px;height:16px;line-height:16px;font-weight:bold;color:#fff;letter-spacing:0.062px;">07:33</span>
<span class="t" style="left:992px;top:387.5px;height:16px;line-height:16px;font-weight:bold;color:#fff;letter-spacing:0.062px;">08:13</span>
<span class="t" style="left:1042px;top:379.5px;height:16px;line-height:16px;font-weight:bold;color:#fff;letter-spacing:-0.050px;">40 min.</span>
<span class="t" style="left:1092px;top:371.5px;height:16px;line-height:16px;font-weight:bold;color:#fff;letter-spacing:-0.369px;">12_SHS-HKB</span>
<span class="t" style="left:1092px;top:387.5px;height:16px;line-height:16px;font-weight:bold;color:#fff;letter-spacing:-0.367px;">(standard)</span>
<span class="t" style="left:1192px;top:371.5px;height:16px;line-height:16px;font-weight:bold;color:#fff;letter-spacing:-0.351px;">FH, Sporthochschule</span>
<span class="t" style="left:1192px;top:387.5px;height:16px;line-height:16px;font-weight:bold;color:#fff;letter-spacing:-0.112px;">Bad Holzkirchen, Zentrum</span>
<div style="left:989px;top:416px;width:49px;height:29px;background:#000000;"></div>
<div style="left:1039px;top:416px;width:49px;height:29px;background:#000000;"></div>
<div style="left:1089px;top:416px;width:99px;height:29px;background:#000000;"></div>
<div style="left:1189px;top:416px;width:399px;height:29px;background:#000000;"></div>
<div style="left:989px;top:445px;width:600px;height:1px;background:#c8c8c8;"></div>
<div style="left:1038px;top:416px;width:1px;height:30px;background:#d4d4d4;"></div>
<div style="left:1088px;top:416px;width:1px;height:30px;background:#d4d4d4;"></div>
<div style="left:1188px;top:416px;width:1px;height:30px;background:#d4d4d4;"></div>
<span class="t" style="left:992px;top:422.5px;height:16px;line-height:16px;font-style:italic;color:#fff;letter-spacing:-0.629px;">08:13...</span>
<span class="t" style="left:1042px;top:422.5px;height:16px;line-height:16px;font-style:italic;color:#fff;letter-spacing:-0.193px;">22 min.</span>
<span class="t" style="left:1092px;top:422.5px;height:16px;line-height:16px;font-style:italic;color:#fff;letter-spacing:-0.405px;">Pause</span>
<span class="t" style="left:1192px;top:422.5px;height:16px;line-height:16px;font-style:italic;color:#fff;letter-spacing:-0.113px;">Bad Holzkirchen, Zentrum</span>
<div style="left:989px;top:446px;width:49px;height:41px;background:#555500;"></div>
<div style="left:1039px;top:446px;width:49px;height:41px;background:#555500;"></div>
<div style="left:1089px;top:446px;width:99px;height:41px;background:#555500;"></div>
<div style="left:1189px;top:446px;width:399px;height:41px;background:#555500;"></div>
<div style="left:989px;top:487px;width:600px;height:1px;background:#c8c8c8;"></div>
<div style="left:1038px;top:446px;width:1px;height:42px;background:#d4d4d4;"></div>
<div style="left:1088px;top:446px;width:1px;height:42px;background:#d4d4d4;"></div>
<div style="left:1188px;top:446px;width:1px;height:42px;background:#d4d4d4;"></div>
<span class="t" style="left:992px;top:450.5px;height:16px;line-height:16px;font-weight:bold;color:#fff;letter-spacing:0.062px;">08:35</span>
<span class="t" style="left:992px;top:466.5px;height:16px;line-height:16px;font-weight:bold;color:#fff;letter-spacing:0.062px;">09:05</span>
<span class="t" style="left:1042px;top:458.5px;height:16px;line-height:16px;font-weight:bold;color:#fff;letter-spacing:-0.050px;">30 min.</span>
<span class="t" style="left:1092px;top:450.5px;height:16px;line-height:16px;font-weight:bold;color:#fff;letter-spacing:-0.335px;">42_HKB-SPZ</span>
<span class="t" style="left:1092px;top:466.5px;height:16px;line-height:16px;font-weight:bold;color:#fff;letter-spacing:-0.367px;">(standard)</span>
<span class="t" style="left:1192px;top:450.5px;height:16px;line-height:16px;font-weight:bold;color:#fff;letter-spacing:-0.112px;">Bad Holzkirchen, Zentrum</span>
<span class="t" style="left:1192px;top:466.5px;height:16px;line-height:16px;font-weight:bold;color:#fff;letter-spacing:-0.306px;">Springe, ZOB</span>
<div style="left:989px;top:488px;width:49px;height:23px;background:#000000;"></div>
<div style="left:1039px;top:488px;width:49px;height:23px;background:#000000;"></div>
<div style="left:1089px;top:488px;width:99px;height:23px;background:#000000;"></div>
<div style="left:1189px;top:488px;width:399px;height:23px;background:#000000;"></div>
<div style="left:989px;top:511px;width:600px;height:1px;background:#c8c8c8;"></div>
<div style="left:1038px;top:488px;width:1px;height:24px;background:#d4d4d4;"></div>
<div style="left:1088px;top:488px;width:1px;height:24px;background:#d4d4d4;"></div>
<div style="left:1188px;top:488px;width:1px;height:24px;background:#d4d4d4;"></div>
<span class="t" style="left:992px;top:491.5px;height:16px;line-height:16px;font-style:italic;color:#fff;letter-spacing:-0.629px;">09:05...</span>
<span class="t" style="left:1042px;top:491.5px;height:16px;line-height:16px;font-style:italic;color:#fff;letter-spacing:-0.280px;">4 min.</span>
<span class="t" style="left:1092px;top:491.5px;height:16px;line-height:16px;font-style:italic;color:#fff;letter-spacing:-0.405px;">Pause</span>
<span class="t" style="left:1192px;top:491.5px;height:16px;line-height:16px;font-style:italic;color:#fff;letter-spacing:-0.308px;">Springe, ZOB</span>
<div style="left:989px;top:512px;width:49px;height:27px;background:#aa5500;"></div>
<div style="left:1039px;top:512px;width:49px;height:27px;background:#aa5500;"></div>
<div style="left:1089px;top:512px;width:99px;height:27px;background:#aa5500;"></div>
<div style="left:1189px;top:512px;width:399px;height:27px;background:#aa5500;"></div>
<div style="left:989px;top:539px;width:600px;height:1px;background:#c8c8c8;"></div>
<div style="left:1038px;top:512px;width:1px;height:28px;background:#d4d4d4;"></div>
<div style="left:1088px;top:512px;width:1px;height:28px;background:#d4d4d4;"></div>
<div style="left:1188px;top:512px;width:1px;height:28px;background:#d4d4d4;"></div>
<span class="t" style="left:992px;top:517.5px;height:16px;line-height:16px;font-weight:bold;color:#fff;letter-spacing:0.163px;">09:09...</span>
<span class="t" style="left:1042px;top:517.5px;height:16px;line-height:16px;font-weight:bold;color:#fff;letter-spacing:-0.050px;">20 min.</span>
<span class="t" style="left:1092px;top:517.5px;height:16px;line-height:16px;font-weight:bold;color:#fff;letter-spacing:-0.104px;">41_SPZ-HUB...</span>
<span class="t" style="left:1192px;top:517.5px;height:16px;line-height:16px;font-weight:bold;color:#fff;letter-spacing:-0.178px;">Springe, ZOB...</span>
<div style="left:989px;top:540px;width:49px;height:39px;background:#000000;"></div>
<div style="left:1039px;top:540px;width:49px;height:39px;background:#000000;"></div>
<div style="left:1089px;top:540px;width:99px;height:39px;background:#000000;"></div>
<div style="left:1189px;top:540px;width:399px;height:39px;background:#000000;"></div>
<div style="left:989px;top:579px;width:600px;height:1px;background:#c8c8c8;"></div>
<div style="left:1038px;top:540px;width:1px;height:40px;background:#d4d4d4;"></div>
<div style="left:1088px;top:540px;width:1px;height:40px;background:#d4d4d4;"></div>
<div style="left:1188px;top:540px;width:1px;height:40px;background:#d4d4d4;"></div>
<span class="t" style="left:992px;top:543.5px;height:16px;line-height:16px;font-style:italic;color:#fff;letter-spacing:-0.606px;">09:29</span>
<span class="t" style="left:992px;top:559.5px;height:16px;line-height:16px;font-style:italic;color:#fff;letter-spacing:-0.606px;">09:58</span>
<span class="t" style="left:1042px;top:551.5px;height:16px;line-height:16px;font-style:italic;color:#fff;letter-spacing:-0.193px;">29 min.</span>
<span class="t" style="left:1092px;top:551.5px;height:16px;line-height:16px;font-style:italic;color:#fff;letter-spacing:-0.405px;">Pause</span>
<span class="t" style="left:1192px;top:551.5px;height:16px;line-height:16px;font-style:italic;color:#fff;letter-spacing:0.031px;">Hugstetten, Bahnhof</span>
<div style="left:989px;top:580px;width:49px;height:29px;background:#aa5500;"></div>
<div style="left:1039px;top:580px;width:49px;height:29px;background:#aa5500;"></div>
<div style="left:1089px;top:580px;width:99px;height:29px;background:#aa5500;"></div>
<div style="left:1189px;top:580px;width:399px;height:29px;background:#aa5500;"></div>
<div style="left:989px;top:609px;width:600px;height:1px;background:#c8c8c8;"></div>
<div style="left:1038px;top:580px;width:1px;height:30px;background:#d4d4d4;"></div>
<div style="left:1088px;top:580px;width:1px;height:30px;background:#d4d4d4;"></div>
<div style="left:1188px;top:580px;width:1px;height:30px;background:#d4d4d4;"></div>
<span class="t" style="left:992px;top:586.5px;height:16px;line-height:16px;font-weight:bold;color:#fff;letter-spacing:0.163px;">09:58...</span>
<span class="t" style="left:1042px;top:586.5px;height:16px;line-height:16px;font-weight:bold;color:#fff;letter-spacing:-0.050px;">22 min.</span>
<span class="t" style="left:1092px;top:586.5px;height:16px;line-height:16px;font-weight:bold;color:#fff;letter-spacing:-0.104px;">41_HUB-SPZ...</span>
<span class="t" style="left:1192px;top:586.5px;height:16px;line-height:16px;font-weight:bold;color:#fff;letter-spacing:0.000px;">Hugstetten, Bahnhof...</span>
<div style="left:989px;top:610px;width:49px;height:23px;background:#000000;"></div>
<div style="left:1039px;top:610px;width:49px;height:23px;background:#000000;"></div>
<div style="left:1089px;top:610px;width:99px;height:23px;background:#000000;"></div>
<div style="left:1189px;top:610px;width:399px;height:23px;background:#000000;"></div>
<div style="left:989px;top:633px;width:600px;height:1px;background:#c8c8c8;"></div>
<div style="left:1038px;top:610px;width:1px;height:24px;background:#d4d4d4;"></div>
<div style="left:1088px;top:610px;width:1px;height:24px;background:#d4d4d4;"></div>
<div style="left:1188px;top:610px;width:1px;height:24px;background:#d4d4d4;"></div>
<span class="t" style="left:992px;top:613.5px;height:16px;line-height:16px;font-style:italic;color:#fff;letter-spacing:-0.629px;">10:20...</span>
<span class="t" style="left:1042px;top:613.5px;height:16px;line-height:16px;font-style:italic;color:#fff;letter-spacing:-0.280px;">4 min.</span>
<span class="t" style="left:1092px;top:613.5px;height:16px;line-height:16px;font-style:italic;color:#fff;letter-spacing:-0.405px;">Pause</span>
<span class="t" style="left:1192px;top:613.5px;height:16px;line-height:16px;font-style:italic;color:#fff;letter-spacing:-0.308px;">Springe, ZOB</span>
<div style="left:989px;top:634px;width:49px;height:35px;background:#555500;"></div>
<div style="left:1039px;top:634px;width:49px;height:35px;background:#555500;"></div>
<div style="left:1089px;top:634px;width:99px;height:35px;background:#555500;"></div>
<div style="left:1189px;top:634px;width:399px;height:35px;background:#555500;"></div>
<div style="left:989px;top:669px;width:600px;height:1px;background:#c8c8c8;"></div>
<div style="left:1038px;top:634px;width:1px;height:36px;background:#d4d4d4;"></div>
<div style="left:1088px;top:634px;width:1px;height:36px;background:#d4d4d4;"></div>
<div style="left:1188px;top:634px;width:1px;height:36px;background:#d4d4d4;"></div>
<span class="t" style="left:992px;top:635.5px;height:16px;line-height:16px;font-weight:bold;color:#fff;letter-spacing:0.062px;">10:24</span>
<span class="t" style="left:992px;top:651.5px;height:16px;line-height:16px;font-weight:bold;color:#fff;letter-spacing:0.062px;">10:50</span>
<span class="t" style="left:1042px;top:643.5px;height:16px;line-height:16px;font-weight:bold;color:#fff;letter-spacing:-0.050px;">26 min.</span>
<span class="t" style="left:1092px;top:635.5px;height:16px;line-height:16px;font-weight:bold;color:#fff;letter-spacing:-0.335px;">42_SPZ-HKB</span>
<span class="t" style="left:1092px;top:651.5px;height:16px;line-height:16px;font-weight:bold;color:#fff;letter-spacing:-0.367px;">(standard)</span>
<span class="t" style="left:1192px;top:635.5px;height:16px;line-height:16px;font-weight:bold;color:#fff;letter-spacing:-0.306px;">Springe, ZOB</span>
<span class="t" style="left:1192px;top:651.5px;height:16px;line-height:16px;font-weight:bold;color:#fff;letter-spacing:-0.112px;">Bad Holzkirchen, Zentrum</span>
<div style="left:989px;top:670px;width:49px;height:23px;background:#000000;"></div>
<div style="left:1039px;top:670px;width:49px;height:23px;background:#000000;"></div>
<div style="left:1089px;top:670px;width:99px;height:23px;background:#000000;"></div>
<div style="left:1189px;top:670px;width:399px;height:23px;background:#000000;"></div>
<div style="left:989px;top:693px;width:600px;height:1px;background:#c8c8c8;"></div>
<div style="left:1038px;top:670px;width:1px;height:24px;background:#d4d4d4;"></div>
<div style="left:1088px;top:670px;width:1px;height:24px;background:#d4d4d4;"></div>
<div style="left:1188px;top:670px;width:1px;height:24px;background:#d4d4d4;"></div>
<span class="t" style="left:992px;top:673.5px;height:16px;line-height:16px;font-style:italic;color:#fff;letter-spacing:-0.629px;">10:50...</span>
<span class="t" style="left:1042px;top:673.5px;height:16px;line-height:16px;font-style:italic;color:#fff;letter-spacing:-0.336px;">17 min.</span>
<span class="t" style="left:1092px;top:673.5px;height:16px;line-height:16px;font-style:italic;color:#fff;letter-spacing:-0.405px;">Pause</span>
<span class="t" style="left:1192px;top:673.5px;height:16px;line-height:16px;font-style:italic;color:#fff;letter-spacing:-0.113px;">Bad Holzkirchen, Zentrum</span>
<div style="left:989px;top:694px;width:49px;height:55px;background:#0055ff;"></div>
<div style="left:1039px;top:694px;width:49px;height:55px;background:#0055ff;"></div>
<div style="left:1089px;top:694px;width:99px;height:55px;background:#0055ff;"></div>
<div style="left:1189px;top:694px;width:399px;height:55px;background:#0055ff;"></div>
<div style="left:989px;top:749px;width:600px;height:1px;background:#c8c8c8;"></div>
<div style="left:1038px;top:694px;width:1px;height:56px;background:#d4d4d4;"></div>
<div style="left:1088px;top:694px;width:1px;height:56px;background:#d4d4d4;"></div>
<div style="left:1188px;top:694px;width:1px;height:56px;background:#d4d4d4;"></div>
<span class="t" style="left:992px;top:705.5px;height:16px;line-height:16px;font-weight:bold;color:#fff;letter-spacing:0.194px;">11:07</span>
<span class="t" style="left:992px;top:721.5px;height:16px;line-height:16px;font-weight:bold;color:#fff;letter-spacing:0.194px;">11:47</span>
<span class="t" style="left:1042px;top:713.5px;height:16px;line-height:16px;font-weight:bold;color:#fff;letter-spacing:-0.050px;">40 min.</span>
<span class="t" style="left:1092px;top:705.5px;height:16px;line-height:16px;font-weight:bold;color:#fff;letter-spacing:-0.369px;">12_HKB-SHS</span>
<span class="t" style="left:1092px;top:721.5px;height:16px;line-height:16px;font-weight:bold;color:#fff;letter-spacing:-0.367px;">(standard)</span>
<span class="t" style="left:1192px;top:705.5px;height:16px;line-height:16px;font-weight:bold;color:#fff;letter-spacing:-0.112px;">Bad Holzkirchen, Zentrum</span>
<span class="t" style="left:1192px;top:721.5px;height:16px;line-height:16px;font-weight:bold;color:#fff;letter-spacing:-0.351px;">FH, Sporthochschule</span>
<div style="left:989px;top:750px;width:49px;height:23px;background:#000000;"></div>
<div style="left:1039px;top:750px;width:49px;height:23px;background:#000000;"></div>
<div style="left:1089px;top:750px;width:99px;height:23px;background:#000000;"></div>
<div style="left:1189px;top:750px;width:399px;height:23px;background:#000000;"></div>
<div style="left:989px;top:773px;width:600px;height:1px;background:#c8c8c8;"></div>
<div style="left:1038px;top:750px;width:1px;height:24px;background:#d4d4d4;"></div>
<div style="left:1088px;top:750px;width:1px;height:24px;background:#d4d4d4;"></div>
<div style="left:1188px;top:750px;width:1px;height:24px;background:#d4d4d4;"></div>
<span class="t" style="left:992px;top:753.5px;height:16px;line-height:16px;font-style:italic;color:#fff;letter-spacing:-0.518px;">11:47...</span>
<span class="t" style="left:1042px;top:753.5px;height:16px;line-height:16px;font-style:italic;color:#fff;letter-spacing:-0.336px;">16 min.</span>
<span class="t" style="left:1092px;top:753.5px;height:16px;line-height:16px;font-style:italic;color:#fff;letter-spacing:-0.405px;">Pause</span>
<span class="t" style="left:1192px;top:753.5px;height:16px;line-height:16px;font-style:italic;color:#fff;letter-spacing:-0.319px;">FH, Sporthochschule</span>
<div style="left:989px;top:774px;width:49px;height:55px;background:#0055ff;"></div>
<div style="left:1039px;top:774px;width:49px;height:55px;background:#0055ff;"></div>
<div style="left:1089px;top:774px;width:99px;height:55px;background:#0055ff;"></div>
<div style="left:1189px;top:774px;width:399px;height:55px;background:#0055ff;"></div>
<div style="left:989px;top:829px;width:600px;height:1px;background:#c8c8c8;"></div>
<div style="left:1038px;top:774px;width:1px;height:56px;background:#d4d4d4;"></div>
<div style="left:1088px;top:774px;width:1px;height:56px;background:#d4d4d4;"></div>
<div style="left:1188px;top:774px;width:1px;height:56px;background:#d4d4d4;"></div>
<span class="t" style="left:992px;top:785.5px;height:16px;line-height:16px;font-weight:bold;color:#fff;letter-spacing:0.062px;">12:03</span>
<span class="t" style="left:992px;top:801.5px;height:16px;line-height:16px;font-weight:bold;color:#fff;letter-spacing:0.062px;">12:43</span>
<span class="t" style="left:1042px;top:793.5px;height:16px;line-height:16px;font-weight:bold;color:#fff;letter-spacing:-0.050px;">40 min.</span>
<span class="t" style="left:1092px;top:785.5px;height:16px;line-height:16px;font-weight:bold;color:#fff;letter-spacing:-0.369px;">12_SHS-HKB</span>
<span class="t" style="left:1092px;top:801.5px;height:16px;line-height:16px;font-weight:bold;color:#fff;letter-spacing:-0.367px;">(standard)</span>
<span class="t" style="left:1192px;top:785.5px;height:16px;line-height:16px;font-weight:bold;color:#fff;letter-spacing:-0.351px;">FH, Sporthochschule</span>
<span class="t" style="left:1192px;top:801.5px;height:16px;line-height:16px;font-weight:bold;color:#fff;letter-spacing:-0.112px;">Bad Holzkirchen, Zentrum</span>
<div style="left:989px;top:830px;width:49px;height:29px;background:#000000;"></div>
<div style="left:1039px;top:830px;width:49px;height:29px;background:#000000;"></div>
<div style="left:1089px;top:830px;width:99px;height:29px;background:#000000;"></div>
<div style="left:1189px;top:830px;width:399px;height:29px;background:#000000;"></div>
<div style="left:989px;top:859px;width:600px;height:1px;background:#c8c8c8;"></div>
<div style="left:1038px;top:830px;width:1px;height:30px;background:#d4d4d4;"></div>
<div style="left:1088px;top:830px;width:1px;height:30px;background:#d4d4d4;"></div>
<div style="left:1188px;top:830px;width:1px;height:30px;background:#d4d4d4;"></div>
<span class="t" style="left:992px;top:836.5px;height:16px;line-height:16px;font-style:italic;color:#fff;letter-spacing:-0.629px;">12:43...</span>
<span class="t" style="left:1042px;top:836.5px;height:16px;line-height:16px;font-style:italic;color:#fff;letter-spacing:-0.193px;">22 min.</span>
<span class="t" style="left:1092px;top:836.5px;height:16px;line-height:16px;font-style:italic;color:#fff;letter-spacing:-0.405px;">Pause</span>
<span class="t" style="left:1192px;top:836.5px;height:16px;line-height:16px;font-style:italic;color:#fff;letter-spacing:-0.113px;">Bad Holzkirchen, Zentrum</span>
<div style="left:989px;top:860px;width:49px;height:41px;background:#555500;"></div>
<div style="left:1039px;top:860px;width:49px;height:41px;background:#555500;"></div>
<div style="left:1089px;top:860px;width:99px;height:41px;background:#555500;"></div>
<div style="left:1189px;top:860px;width:399px;height:41px;background:#555500;"></div>
<div style="left:989px;top:901px;width:600px;height:1px;background:#c8c8c8;"></div>
<div style="left:1038px;top:860px;width:1px;height:42px;background:#d4d4d4;"></div>
<div style="left:1088px;top:860px;width:1px;height:42px;background:#d4d4d4;"></div>
<div style="left:1188px;top:860px;width:1px;height:42px;background:#d4d4d4;"></div>
<span class="t" style="left:992px;top:864.5px;height:16px;line-height:16px;font-weight:bold;color:#fff;letter-spacing:0.062px;">13:05</span>
<span class="t" style="left:992px;top:880.5px;height:16px;line-height:16px;font-weight:bold;color:#fff;letter-spacing:0.062px;">13:35</span>
<span class="t" style="left:1042px;top:872.5px;height:16px;line-height:16px;font-weight:bold;color:#fff;letter-spacing:-0.050px;">30 min.</span>
<span class="t" style="left:1092px;top:864.5px;height:16px;line-height:16px;font-weight:bold;color:#fff;letter-spacing:-0.335px;">42_HKB-SPZ</span>
<span class="t" style="left:1092px;top:880.5px;height:16px;line-height:16px;font-weight:bold;color:#fff;letter-spacing:-0.367px;">(standard)</span>
<span class="t" style="left:1192px;top:864.5px;height:16px;line-height:16px;font-weight:bold;color:#fff;letter-spacing:-0.112px;">Bad Holzkirchen, Zentrum</span>
<span class="t" style="left:1192px;top:880.5px;height:16px;line-height:16px;font-weight:bold;color:#fff;letter-spacing:-0.306px;">Springe, ZOB</span>
<div style="left:1635px;top:120px;width:276px;height:321px;border:1px solid #dcdcdc;"></div>
<div style="left:1643px;top:112px;width:94px;height:16px;background:#f0f0f0;"></div>
<span class="t" style="left:1644px;top:113px;height:16px;line-height:16px;letter-spacing:-0.004px;">Fahrt hinzufügen</span>
<div class="btn" style="left:1646px;top:139px;width:123px;height:22px;"></div>
<span class="t" style="left:1696.5px;top:143px;height:16px;line-height:16px;letter-spacing:-0.004px;">Neu</span>
<div class="btn" style="left:1777px;top:139px;width:123px;height:22px;"></div>
<span class="t" style="left:1816.5px;top:143px;height:16px;line-height:16px;letter-spacing:-0.195px;">Löschen</span>
<div style="left:1645px;top:168px;width:256px;height:235px;background:#ffffff;border:1px solid #828790;"></div>
<span class="t" style="left:1650px;top:174px;height:16px;line-height:16px;letter-spacing:-0.001px;">Zeit</span>
<span class="t" style="left:1700px;top:174px;height:16px;line-height:16px;letter-spacing:-0.470px;">Erw. Pause</span>
<span class="t" style="left:1775px;top:174px;height:16px;line-height:16px;letter-spacing:-0.204px;">Route</span>
<div style="left:1695px;top:170px;width:1px;height:22px;background:#e5e5e5;"></div>
<div style="left:1770px;top:170px;width:1px;height:22px;background:#e5e5e5;"></div>
<div class="btn" style="left:1827px;top:410px;width:73px;height:22px;"></div>
<span class="t" style="left:1845.0px;top:414px;height:16px;line-height:16px;letter-spacing:0.046px;">mehr...</span>
<div style="left:1635px;top:457px;width:276px;height:153px;border:1px solid #dcdcdc;"></div>
<div style="left:1643px;top:449px;width:87px;height:16px;background:#f0f0f0;"></div>
<span class="t" style="left:1644px;top:449px;height:16px;line-height:16px;letter-spacing:-0.065px;">Aktueller Dienst</span>
<span class="t" style="left:1645px;top:476px;height:16px;line-height:16px;letter-spacing:-0.051px;">Linien:</span>
<span class="t" style="left:1712px;top:476px;height:16px;line-height:16px;letter-spacing:-0.473px;">11, 13, 12, 42, 41</span>
<span class="t" style="left:1645px;top:498px;height:16px;line-height:16px;letter-spacing:-0.235px;">Startzeit:</span>
<span class="t" style="left:1712px;top:498px;height:16px;line-height:16px;letter-spacing:-0.406px;">05:38</span>
<span class="t" style="left:1645px;top:520px;height:16px;line-height:16px;letter-spacing:-0.295px;">Endzeit:</span>
<span class="t" style="left:1712px;top:520px;height:16px;line-height:16px;letter-spacing:-0.406px;">13:35</span>
<span class="t" style="left:1645px;top:542px;height:16px;line-height:16px;letter-spacing:-0.275px;">Gesamtzeit:</span>
<span class="t" style="left:1712px;top:542px;height:16px;line-height:16px;letter-spacing:-0.406px;">07:57</span>
<span class="t" style="left:1645px;top:564px;height:16px;line-height:16px;letter-spacing:-0.225px;">Lenkzeit:</span>
<span class="t" style="left:1712px;top:564px;height:16px;line-height:16px;letter-spacing:-0.406px;">05:37</span>
<span class="t" style="left:1645px;top:586px;height:16px;line-height:16px;letter-spacing:-0.337px;">Pausenzeit:</span>
<span class="t" style="left:1712px;top:586px;height:16px;line-height:16px;letter-spacing:-0.406px;">02:20</span>
<div class="btn" style="left:1636px;top:618px;width:274px;height:22px;"></div>
<span class="t" style="left:1724.0px;top:622px;height:16px;line-height:16px;letter-spacing:-0.169px;">Fahrten sortieren...</span>
<div class="btn" style="left:1636px;top:648px;width:274px;height:22px;"></div>
<span class="t" style="left:1738.5px;top:652px;height:16px;line-height:16px;letter-spacing:-0.169px;">Exportieren...</span>
</body></html>
